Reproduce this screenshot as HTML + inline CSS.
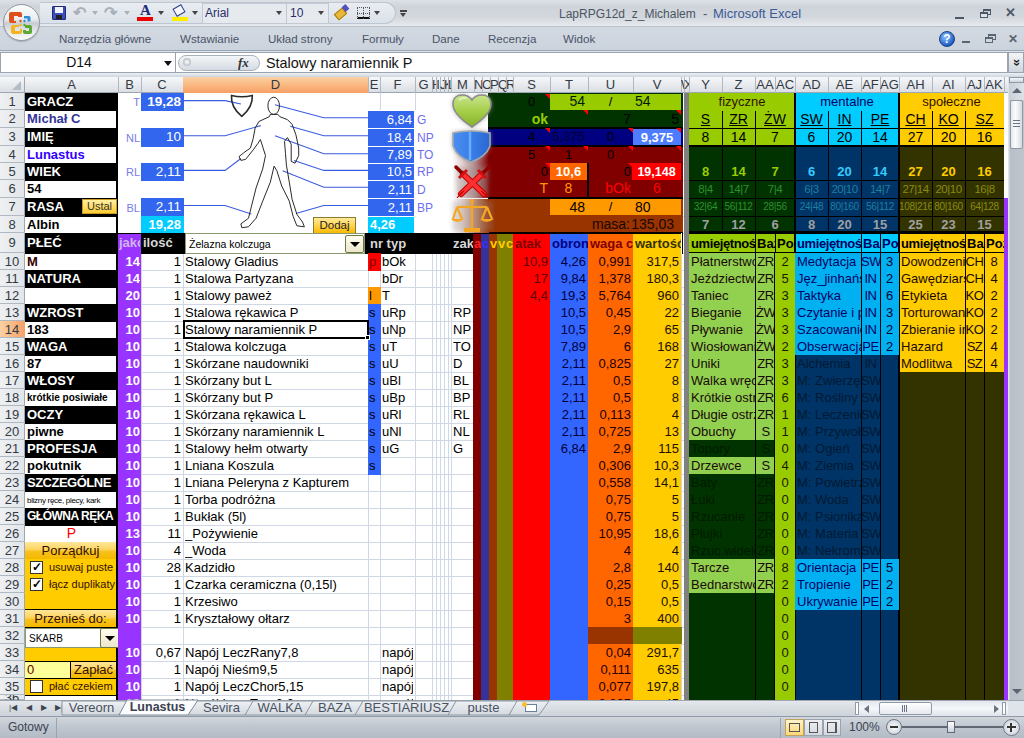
<!DOCTYPE html>
<html><head><meta charset="utf-8"><style>
html,body{margin:0;padding:0;width:1024px;height:738px;overflow:hidden;background:#fff;}
#root{position:relative;width:1024px;height:738px;overflow:hidden;font-family:"Liberation Sans",sans-serif;}
#root div{position:absolute;box-sizing:border-box;}
#root .t{white-space:nowrap;overflow:hidden;}
</style></head><body><div id="root">
<div style="left:0px;top:0px;width:1024px;height:26px;background:linear-gradient(#dde1e6 0%,#cfd4da 25%,#d2d7dd 65%,#e7eaee 100%);"></div>
<div style="left:0px;top:26px;width:1024px;height:25px;background:linear-gradient(#d3d9e1,#cbd3dd);"></div>
<div style="left:0px;top:26px;width:1024px;height:1px;background:#b9c1cb;"></div>
<div style="left:0px;top:50px;width:1024px;height:1px;background:#9aa7b7;"></div>
<div style="left:0px;top:51px;width:1024px;height:26px;background:#dde3ea;"></div>
<div style="left:0px;top:52px;width:176px;height:21px;background:#fff;border:1px solid #9aa3ae;"></div>
<div style="left:176px;top:52px;width:832px;height:21px;background:#fff;border:1px solid #9aa3ae;border-left:none;"></div>
<div style="left:1008px;top:52px;width:16px;height:21px;background:linear-gradient(#f2f4f7,#cfd6de);border:1px solid #9aa3ae;"></div>
<div class="t" style="left:1008px;top:52px;width:16px;height:21px;line-height:20px;text-align:center;font-size:13px;font-weight:bold;color:#222;transform:rotate(90deg)">&#187;</div>
<div style="left:0px;top:73px;width:1024px;height:4px;background:linear-gradient(#eef1f5,#cdd5df);"></div>
<div style="left:40px;top:2px;width:356px;height:22px;background:linear-gradient(#e9edf2,#dbe1e8);border:1px solid #bcc5d0;border-radius:0 11px 11px 0;border-left:none;"></div>
<div style="left:202px;top:3px;width:85px;height:21px;background:#e6eaef;border:1px solid #c2c9d2;"></div>
<div style="left:287px;top:3px;width:42px;height:21px;background:#e6eaef;border:1px solid #c2c9d2;border-left:none;"></div>
<div class="t" style="left:205px;top:3px;width:60px;height:20px;line-height:20px;color:#2a2a6a;font-weight:normal;font-size:12px;text-align:left;">Arial</div>
<div class="t" style="left:290px;top:3px;width:30px;height:20px;line-height:20px;color:#2a2a6a;font-weight:normal;font-size:12px;text-align:left;">10</div>
<div style="left:276px;top:11px;width:0;height:0;border-left:3.5px solid transparent;border-right:3.5px solid transparent;border-top:4px solid #444;"></div>
<div style="left:318px;top:11px;width:0;height:0;border-left:3.5px solid transparent;border-right:3.5px solid transparent;border-top:4px solid #444;"></div>
<div style="left:158px;top:11px;width:0;height:0;border-left:3.5px solid transparent;border-right:3.5px solid transparent;border-top:4px solid #444;"></div>
<div style="left:192px;top:11px;width:0;height:0;border-left:3.5px solid transparent;border-right:3.5px solid transparent;border-top:4px solid #444;"></div>
<div style="left:374px;top:11px;width:0;height:0;border-left:3.5px solid transparent;border-right:3.5px solid transparent;border-top:4px solid #444;"></div>
<div style="left:92px;top:11px;width:0;height:0;border-left:3.5px solid transparent;border-right:3.5px solid transparent;border-top:4px solid #a9b0b8;"></div>
<div style="left:124px;top:11px;width:0;height:0;border-left:3.5px solid transparent;border-right:3.5px solid transparent;border-top:4px solid #a9b0b8;"></div>
<div style="left:400px;top:10px;width:7px;height:2px;background:#444"></div>
<div style="left:400px;top:13px;width:0;height:0;border-left:3.5px solid transparent;border-right:3.5px solid transparent;border-top:4px solid #444;"></div>
<div style="left:52px;top:6px;width:14px;height:14px;background:#3c4fb8;border:1px solid #1e2a78;border-radius:1px;"></div>
<div style="left:55px;top:7px;width:8px;height:6px;background:#f0f4ff;"></div>
<div style="left:56px;top:15px;width:6px;height:4px;background:#202020;"></div>
<div class="t" style="left:73px;top:3px;width:18px;height:20px;line-height:20px;font-size:16px;color:#a9b0b8;font-weight:bold">&#8630;</div>
<div class="t" style="left:104px;top:3px;width:18px;height:20px;line-height:20px;font-size:16px;color:#a9b0b8;font-weight:bold">&#8631;</div>
<div class="t" style="left:137px;top:2px;width:17px;height:16px;line-height:16px;font-size:15px;color:#1a2a7a;font-weight:bold;text-align:center;font-family:'Liberation Serif'">A</div>
<div style="left:137px;top:17px;width:16px;height:4px;background:#ee0000;"></div>
<div style="left:174px;top:6px;width:10px;height:9px;background:#f4f6fa;border:1px solid #2a3d8a;transform:rotate(-30deg);"></div>
<div style="left:172px;top:17px;width:16px;height:4px;background:#ffee00;"></div>
<div style="left:335px;top:10px;width:11px;height:8px;background:#e8b838;border:1px solid #a47a10;transform:rotate(-40deg);"></div>
<div style="left:343px;top:5px;width:5px;height:6px;background:#5050c0;transform:rotate(-40deg);"></div>
<div style="left:357px;top:7px;width:13px;height:12px;border:1px dotted #555;border-bottom:2px solid #111"></div>
<div style="left:363px;top:7px;width:1px;height:12px;border-left:1px dotted #555"></div>
<div style="left:357px;top:13px;width:13px;height:1px;border-top:1px dotted #555"></div>
<div style="left:3px;top:4px;width:37px;height:37px;background:linear-gradient(#fbfbfb 0%,#eceef0 40%,#c9cdd2 52%,#e6e8ea 75%,#fafafa 100%);border-radius:50%;border:1px solid #8e969f;box-shadow:0 1px 1px rgba(0,0,0,.2);"></div>
<svg style="position:absolute;left:0;top:0" width="44" height="44" viewBox="0 0 44 44">
<path d="M11,12 h9 a2,2 0 0 1 2,2 v3 h-4 v-1 h-4 v5 h2 v2 h-5 a2,2 0 0 1 -2,-2 v-7 a2,2 0 0 1 2,-2 z" fill="#e0501a"/>
<path d="M24,16 h5 a1.5,1.5 0 0 1 1.5,1.5 v4 h-3 v-3 h-3.5 z" fill="#2d8fd6"/>
<path d="M12,25 h7 v2 h-4 v4 h5 v-2 h2 v3 a2,2 0 0 1 -2,2 h-7 a2,2 0 0 1 -2,-2 v-5 a2,2 0 0 1 2,-2 z" fill="#f4b321"/>
<path d="M25,25 h5 a2,2 0 0 1 2,2 v5 a2,2 0 0 1 -2,2 h-5 a2,2 0 0 1 -2,-2 v-2 h3 v1 h3 v-3 h-4 z" fill="#5da832"/>
<circle cx="20.5" cy="21" r="1.2" fill="#e0501a"/><circle cx="24.5" cy="21" r="1.2" fill="#2d8fd6"/>
<circle cx="20.5" cy="25" r="1.2" fill="#f4b321"/><circle cx="24.5" cy="25" r="1.2" fill="#5da832"/>
</svg>
<div class="t" style="left:559px;top:4px;width:142px;height:20px;line-height:20px;color:#4b5563;font-weight:normal;font-size:12px;text-align:left;">LapRPG12d_z_Michalem</div>
<div class="t" style="left:703px;top:4px;width:12px;height:20px;line-height:20px;color:#4b5563;font-weight:normal;font-size:13px;text-align:left;">-</div>
<div class="t" style="left:713px;top:4px;width:100px;height:20px;line-height:20px;color:#3b5a98;font-weight:normal;font-size:13px;text-align:left;">Microsoft Excel</div>
<div style="left:955px;top:17px;width:9px;height:2px;background:#4d5866;"></div>
<div style="left:983px;top:9px;width:8px;height:6px;background:transparent;border:1px solid #4d5866;border-top:2px solid #4d5866;"></div>
<div style="left:980px;top:12px;width:8px;height:6px;background:#dfe3e8;border:1px solid #4d5866;border-top:2px solid #4d5866;"></div>
<div class="t" style="left:1003px;top:3px;width:14px;height:20px;line-height:20px;color:#4d5866;font-weight:bold;font-size:13px;text-align:center;">✕</div>
<div style="left:962px;top:41px;width:8px;height:2px;background:#5a6573;"></div>
<div style="left:988px;top:34px;width:8px;height:6px;background:transparent;border:1px solid #5a6573;border-top:2px solid #5a6573;"></div>
<div style="left:985px;top:37px;width:8px;height:6px;background:#d0d7df;border:1px solid #5a6573;border-top:2px solid #5a6573;"></div>
<div class="t" style="left:1006px;top:29px;width:14px;height:20px;line-height:20px;color:#5a6573;font-weight:bold;font-size:12px;text-align:center;">✕</div>
<div style="left:939px;top:31px;width:16px;height:16px;background:radial-gradient(circle at 40% 35%,#8fc3ff,#1f5fc8 70%,#0d3a8a);border-radius:50%;border:1px solid #1a3f80;"></div>
<div class="t" style="left:939px;top:31px;width:16px;height:16px;line-height:16px;color:#fff;font-weight:bold;font-size:12px;text-align:center;">?</div>
<div class="t" style="left:59px;top:29px;width:120px;height:20px;line-height:20px;color:#4a5468;font-weight:normal;font-size:11.6px;text-align:left;">Narzędzia główne</div>
<div class="t" style="left:180px;top:29px;width:120px;height:20px;line-height:20px;color:#4a5468;font-weight:normal;font-size:11.6px;text-align:left;">Wstawianie</div>
<div class="t" style="left:268px;top:29px;width:120px;height:20px;line-height:20px;color:#4a5468;font-weight:normal;font-size:11.6px;text-align:left;">Układ strony</div>
<div class="t" style="left:362px;top:29px;width:120px;height:20px;line-height:20px;color:#4a5468;font-weight:normal;font-size:11.6px;text-align:left;">Formuły</div>
<div class="t" style="left:432px;top:29px;width:120px;height:20px;line-height:20px;color:#4a5468;font-weight:normal;font-size:11.6px;text-align:left;">Dane</div>
<div class="t" style="left:488px;top:29px;width:120px;height:20px;line-height:20px;color:#4a5468;font-weight:normal;font-size:11.6px;text-align:left;">Recenzja</div>
<div class="t" style="left:563px;top:29px;width:120px;height:20px;line-height:20px;color:#4a5468;font-weight:normal;font-size:11.6px;text-align:left;">Widok</div>
<div class="t" style="left:2px;top:53px;width:174px;height:19px;line-height:19px;color:#111;font-weight:normal;font-size:14px;text-align:center;padding-right:20px;">D14</div>
<div style="left:164px;top:61px;width:0;height:0;border-left:4px solid transparent;border-right:4px solid transparent;border-top:5px solid #111;"></div>
<div style="left:178px;top:55px;width:82px;height:16px;background:linear-gradient(#f4f6f8,#d5dbe2);border:1px solid #a8b0ba;border-radius:8px;"></div>
<div style="left:183px;top:58px;width:8px;height:8px;background:radial-gradient(#fff,#9aa3ad);border-radius:50%;"></div>
<div class="t" style="left:238px;top:54px;width:20px;height:18px;line-height:18px;font-size:13px;font-style:italic;font-weight:bold;color:#333;font-family:'Liberation Serif'">fx</div>
<div class="t" style="left:266px;top:53px;width:300px;height:20px;line-height:20px;color:#111;font-weight:normal;font-size:14.4px;text-align:left;">Stalowy naramiennik P</div>
<div style="left:0px;top:77px;width:1009px;height:16px;background:linear-gradient(#f7f8fa,#e4e7eb 60%,#d9dde2);"></div>
<div style="left:0px;top:92px;width:1009px;height:1px;background:#9ea7b1;"></div>
<div style="left:0px;top:93px;width:25px;height:607px;background:linear-gradient(90deg,#eef0f2,#e2e5e9);"></div>
<div style="left:24px;top:77px;width:1px;height:623px;background:#9ea7b1;"></div>
<div style="left:12px;top:81px;width:0;height:0;border-left:9px solid transparent;border-bottom:9px solid #b4bcc5;"></div>
<div style="left:118px;top:77px;width:1px;height:16px;background:#b0b8c2;"></div>
<div class="t" style="left:25px;top:77px;width:93px;height:15px;line-height:15px;color:#333a44;font-weight:normal;font-size:13px;text-align:center;">A</div>
<div style="left:141px;top:77px;width:1px;height:16px;background:#b0b8c2;"></div>
<div class="t" style="left:118px;top:77px;width:23px;height:15px;line-height:15px;color:#333a44;font-weight:normal;font-size:13px;text-align:center;">B</div>
<div style="left:183px;top:77px;width:1px;height:16px;background:#b0b8c2;"></div>
<div class="t" style="left:141px;top:77px;width:42px;height:15px;line-height:15px;color:#333a44;font-weight:normal;font-size:13px;text-align:center;">C</div>
<div style="left:183px;top:77px;width:185px;height:16px;background:linear-gradient(#fbd1a4,#f9b37a 60%,#f6a066);"></div>
<div style="left:368px;top:77px;width:1px;height:16px;background:#b0b8c2;"></div>
<div class="t" style="left:183px;top:77px;width:185px;height:15px;line-height:15px;color:#333a44;font-weight:normal;font-size:13px;text-align:center;">D</div>
<div style="left:380px;top:77px;width:1px;height:16px;background:#b0b8c2;"></div>
<div class="t" style="left:368px;top:77px;width:12px;height:15px;line-height:15px;color:#333a44;font-weight:normal;font-size:13px;text-align:center;">E</div>
<div style="left:415px;top:77px;width:1px;height:16px;background:#b0b8c2;"></div>
<div class="t" style="left:380px;top:77px;width:35px;height:15px;line-height:15px;color:#333a44;font-weight:normal;font-size:13px;text-align:center;">F</div>
<div style="left:432px;top:77px;width:1px;height:16px;background:#b0b8c2;"></div>
<div class="t" style="left:415px;top:77px;width:17px;height:15px;line-height:15px;color:#333a44;font-weight:normal;font-size:13px;text-align:center;">G</div>
<div style="left:436px;top:77px;width:1px;height:16px;background:#b0b8c2;"></div>
<div class="t" style="left:432px;top:77px;width:4px;height:15px;line-height:15px;color:#333a44;font-weight:normal;font-size:13px;text-align:center;">H</div>
<div style="left:440px;top:77px;width:1px;height:16px;background:#b0b8c2;"></div>
<div class="t" style="left:436px;top:77px;width:4px;height:15px;line-height:15px;color:#333a44;font-weight:normal;font-size:13px;text-align:center;">I</div>
<div style="left:444px;top:77px;width:1px;height:16px;background:#b0b8c2;"></div>
<div class="t" style="left:440px;top:77px;width:4px;height:15px;line-height:15px;color:#333a44;font-weight:normal;font-size:13px;text-align:center;">J</div>
<div style="left:448px;top:77px;width:1px;height:16px;background:#b0b8c2;"></div>
<div class="t" style="left:444px;top:77px;width:4px;height:15px;line-height:15px;color:#333a44;font-weight:normal;font-size:13px;text-align:center;">K</div>
<div style="left:451px;top:77px;width:1px;height:16px;background:#b0b8c2;"></div>
<div class="t" style="left:448px;top:77px;width:3px;height:15px;line-height:15px;color:#333a44;font-weight:normal;font-size:13px;text-align:center;">L</div>
<div style="left:474px;top:77px;width:1px;height:16px;background:#b0b8c2;"></div>
<div class="t" style="left:451px;top:77px;width:23px;height:15px;line-height:15px;color:#333a44;font-weight:normal;font-size:13px;text-align:center;">M</div>
<div style="left:482px;top:77px;width:1px;height:16px;background:#b0b8c2;"></div>
<div class="t" style="left:474px;top:77px;width:8px;height:15px;line-height:15px;color:#333a44;font-weight:normal;font-size:13px;text-align:center;">N</div>
<div style="left:490px;top:77px;width:1px;height:16px;background:#b0b8c2;"></div>
<div class="t" style="left:482px;top:77px;width:8px;height:15px;line-height:15px;color:#333a44;font-weight:normal;font-size:13px;text-align:center;">O</div>
<div style="left:498px;top:77px;width:1px;height:16px;background:#b0b8c2;"></div>
<div class="t" style="left:490px;top:77px;width:8px;height:15px;line-height:15px;color:#333a44;font-weight:normal;font-size:13px;text-align:center;">P</div>
<div style="left:506px;top:77px;width:1px;height:16px;background:#b0b8c2;"></div>
<div class="t" style="left:498px;top:77px;width:8px;height:15px;line-height:15px;color:#333a44;font-weight:normal;font-size:13px;text-align:center;">Q</div>
<div style="left:513px;top:77px;width:1px;height:16px;background:#b0b8c2;"></div>
<div class="t" style="left:506px;top:77px;width:7px;height:15px;line-height:15px;color:#333a44;font-weight:normal;font-size:13px;text-align:center;">R</div>
<div style="left:550px;top:77px;width:1px;height:16px;background:#b0b8c2;"></div>
<div class="t" style="left:513px;top:77px;width:37px;height:15px;line-height:15px;color:#333a44;font-weight:normal;font-size:13px;text-align:center;">S</div>
<div style="left:588px;top:77px;width:1px;height:16px;background:#b0b8c2;"></div>
<div class="t" style="left:550px;top:77px;width:38px;height:15px;line-height:15px;color:#333a44;font-weight:normal;font-size:13px;text-align:center;">T</div>
<div style="left:633px;top:77px;width:1px;height:16px;background:#b0b8c2;"></div>
<div class="t" style="left:588px;top:77px;width:45px;height:15px;line-height:15px;color:#333a44;font-weight:normal;font-size:13px;text-align:center;">U</div>
<div style="left:681px;top:77px;width:1px;height:16px;background:#b0b8c2;"></div>
<div class="t" style="left:633px;top:77px;width:48px;height:15px;line-height:15px;color:#333a44;font-weight:normal;font-size:13px;text-align:center;">V</div>
<div style="left:684px;top:77px;width:1px;height:16px;background:#b0b8c2;"></div>
<div class="t" style="left:681px;top:77px;width:3px;height:15px;line-height:15px;color:#333a44;font-weight:normal;font-size:13px;text-align:center;">W</div>
<div style="left:689px;top:77px;width:1px;height:16px;background:#b0b8c2;"></div>
<div class="t" style="left:684px;top:77px;width:5px;height:15px;line-height:15px;color:#333a44;font-weight:normal;font-size:13px;text-align:center;">X</div>
<div style="left:722px;top:77px;width:1px;height:16px;background:#b0b8c2;"></div>
<div class="t" style="left:689px;top:77px;width:33px;height:15px;line-height:15px;color:#333a44;font-weight:normal;font-size:13px;text-align:center;">Y</div>
<div style="left:755px;top:77px;width:1px;height:16px;background:#b0b8c2;"></div>
<div class="t" style="left:722px;top:77px;width:33px;height:15px;line-height:15px;color:#333a44;font-weight:normal;font-size:13px;text-align:center;">Z</div>
<div style="left:775px;top:77px;width:1px;height:16px;background:#b0b8c2;"></div>
<div class="t" style="left:755px;top:77px;width:20px;height:15px;line-height:15px;color:#333a44;font-weight:normal;font-size:13px;text-align:center;">AA</div>
<div style="left:795px;top:77px;width:1px;height:16px;background:#b0b8c2;"></div>
<div class="t" style="left:775px;top:77px;width:20px;height:15px;line-height:15px;color:#333a44;font-weight:normal;font-size:13px;text-align:center;">AC</div>
<div style="left:828px;top:77px;width:1px;height:16px;background:#b0b8c2;"></div>
<div class="t" style="left:795px;top:77px;width:33px;height:15px;line-height:15px;color:#333a44;font-weight:normal;font-size:13px;text-align:center;">AD</div>
<div style="left:861px;top:77px;width:1px;height:16px;background:#b0b8c2;"></div>
<div class="t" style="left:828px;top:77px;width:33px;height:15px;line-height:15px;color:#333a44;font-weight:normal;font-size:13px;text-align:center;">AE</div>
<div style="left:880px;top:77px;width:1px;height:16px;background:#b0b8c2;"></div>
<div class="t" style="left:861px;top:77px;width:19px;height:15px;line-height:15px;color:#333a44;font-weight:normal;font-size:13px;text-align:center;">AF</div>
<div style="left:899px;top:77px;width:1px;height:16px;background:#b0b8c2;"></div>
<div class="t" style="left:880px;top:77px;width:19px;height:15px;line-height:15px;color:#333a44;font-weight:normal;font-size:13px;text-align:center;">AG</div>
<div style="left:932px;top:77px;width:1px;height:16px;background:#b0b8c2;"></div>
<div class="t" style="left:899px;top:77px;width:33px;height:15px;line-height:15px;color:#333a44;font-weight:normal;font-size:13px;text-align:center;">AH</div>
<div style="left:965px;top:77px;width:1px;height:16px;background:#b0b8c2;"></div>
<div class="t" style="left:932px;top:77px;width:33px;height:15px;line-height:15px;color:#333a44;font-weight:normal;font-size:13px;text-align:center;">AI</div>
<div style="left:984px;top:77px;width:1px;height:16px;background:#b0b8c2;"></div>
<div class="t" style="left:965px;top:77px;width:19px;height:15px;line-height:15px;color:#333a44;font-weight:normal;font-size:13px;text-align:center;">AJ</div>
<div style="left:1004px;top:77px;width:1px;height:16px;background:#b0b8c2;"></div>
<div class="t" style="left:984px;top:77px;width:20px;height:15px;line-height:15px;color:#333a44;font-weight:normal;font-size:13px;text-align:center;">AK</div>
<div style="left:1009px;top:77px;width:1px;height:16px;background:#b0b8c2;"></div>
<div class="t" style="left:1004px;top:77px;width:5px;height:15px;line-height:15px;color:#333a44;font-weight:normal;font-size:13px;text-align:center;"></div>
<div style="left:0px;top:109px;width:25px;height:1px;background:#b0b8c2;"></div>
<div class="t" style="left:0px;top:93px;width:24px;height:17px;line-height:17px;color:#333a44;font-weight:normal;font-size:13px;text-align:center;">1</div>
<div style="left:0px;top:127px;width:25px;height:1px;background:#b0b8c2;"></div>
<div class="t" style="left:0px;top:110px;width:24px;height:18px;line-height:18px;color:#333a44;font-weight:normal;font-size:13px;text-align:center;">2</div>
<div style="left:0px;top:145px;width:25px;height:1px;background:#b0b8c2;"></div>
<div class="t" style="left:0px;top:128px;width:24px;height:18px;line-height:18px;color:#333a44;font-weight:normal;font-size:13px;text-align:center;">3</div>
<div style="left:0px;top:162px;width:25px;height:1px;background:#b0b8c2;"></div>
<div class="t" style="left:0px;top:146px;width:24px;height:17px;line-height:17px;color:#333a44;font-weight:normal;font-size:13px;text-align:center;">4</div>
<div style="left:0px;top:179px;width:25px;height:1px;background:#b0b8c2;"></div>
<div class="t" style="left:0px;top:163px;width:24px;height:17px;line-height:17px;color:#333a44;font-weight:normal;font-size:13px;text-align:center;">5</div>
<div style="left:0px;top:197px;width:25px;height:1px;background:#b0b8c2;"></div>
<div class="t" style="left:0px;top:180px;width:24px;height:18px;line-height:18px;color:#333a44;font-weight:normal;font-size:13px;text-align:center;">6</div>
<div style="left:0px;top:215px;width:25px;height:1px;background:#b0b8c2;"></div>
<div class="t" style="left:0px;top:198px;width:24px;height:18px;line-height:18px;color:#333a44;font-weight:normal;font-size:13px;text-align:center;">7</div>
<div style="left:0px;top:232px;width:25px;height:1px;background:#b0b8c2;"></div>
<div class="t" style="left:0px;top:216px;width:24px;height:17px;line-height:17px;color:#333a44;font-weight:normal;font-size:13px;text-align:center;">8</div>
<div style="left:0px;top:252px;width:25px;height:1px;background:#b0b8c2;"></div>
<div class="t" style="left:0px;top:233px;width:24px;height:20px;line-height:20px;color:#333a44;font-weight:normal;font-size:13px;text-align:center;">9</div>
<div style="left:0px;top:269px;width:25px;height:1px;background:#b0b8c2;"></div>
<div class="t" style="left:0px;top:253px;width:24px;height:17px;line-height:17px;color:#333a44;font-weight:normal;font-size:13px;text-align:center;">10</div>
<div style="left:0px;top:286px;width:25px;height:1px;background:#b0b8c2;"></div>
<div class="t" style="left:0px;top:270px;width:24px;height:17px;line-height:17px;color:#333a44;font-weight:normal;font-size:13px;text-align:center;">11</div>
<div style="left:0px;top:303px;width:25px;height:1px;background:#b0b8c2;"></div>
<div class="t" style="left:0px;top:287px;width:24px;height:17px;line-height:17px;color:#333a44;font-weight:normal;font-size:13px;text-align:center;">12</div>
<div style="left:0px;top:320px;width:25px;height:1px;background:#b0b8c2;"></div>
<div class="t" style="left:0px;top:304px;width:24px;height:17px;line-height:17px;color:#333a44;font-weight:normal;font-size:13px;text-align:center;">13</div>
<div style="left:0px;top:321px;width:25px;height:17px;background:linear-gradient(90deg,#fbd1a4,#f6a066);"></div>
<div style="left:0px;top:337px;width:25px;height:1px;background:#b0b8c2;"></div>
<div class="t" style="left:0px;top:321px;width:24px;height:17px;line-height:17px;color:#333a44;font-weight:normal;font-size:13px;text-align:center;">14</div>
<div style="left:0px;top:354px;width:25px;height:1px;background:#b0b8c2;"></div>
<div class="t" style="left:0px;top:338px;width:24px;height:17px;line-height:17px;color:#333a44;font-weight:normal;font-size:13px;text-align:center;">15</div>
<div style="left:0px;top:371px;width:25px;height:1px;background:#b0b8c2;"></div>
<div class="t" style="left:0px;top:355px;width:24px;height:17px;line-height:17px;color:#333a44;font-weight:normal;font-size:13px;text-align:center;">16</div>
<div style="left:0px;top:388px;width:25px;height:1px;background:#b0b8c2;"></div>
<div class="t" style="left:0px;top:372px;width:24px;height:17px;line-height:17px;color:#333a44;font-weight:normal;font-size:13px;text-align:center;">17</div>
<div style="left:0px;top:405px;width:25px;height:1px;background:#b0b8c2;"></div>
<div class="t" style="left:0px;top:389px;width:24px;height:17px;line-height:17px;color:#333a44;font-weight:normal;font-size:13px;text-align:center;">18</div>
<div style="left:0px;top:422px;width:25px;height:1px;background:#b0b8c2;"></div>
<div class="t" style="left:0px;top:406px;width:24px;height:17px;line-height:17px;color:#333a44;font-weight:normal;font-size:13px;text-align:center;">19</div>
<div style="left:0px;top:439px;width:25px;height:1px;background:#b0b8c2;"></div>
<div class="t" style="left:0px;top:423px;width:24px;height:17px;line-height:17px;color:#333a44;font-weight:normal;font-size:13px;text-align:center;">20</div>
<div style="left:0px;top:456px;width:25px;height:1px;background:#b0b8c2;"></div>
<div class="t" style="left:0px;top:440px;width:24px;height:17px;line-height:17px;color:#333a44;font-weight:normal;font-size:13px;text-align:center;">21</div>
<div style="left:0px;top:473px;width:25px;height:1px;background:#b0b8c2;"></div>
<div class="t" style="left:0px;top:457px;width:24px;height:17px;line-height:17px;color:#333a44;font-weight:normal;font-size:13px;text-align:center;">22</div>
<div style="left:0px;top:490px;width:25px;height:1px;background:#b0b8c2;"></div>
<div class="t" style="left:0px;top:474px;width:24px;height:17px;line-height:17px;color:#333a44;font-weight:normal;font-size:13px;text-align:center;">23</div>
<div style="left:0px;top:507px;width:25px;height:1px;background:#b0b8c2;"></div>
<div class="t" style="left:0px;top:491px;width:24px;height:17px;line-height:17px;color:#333a44;font-weight:normal;font-size:13px;text-align:center;">24</div>
<div style="left:0px;top:524px;width:25px;height:1px;background:#b0b8c2;"></div>
<div class="t" style="left:0px;top:508px;width:24px;height:17px;line-height:17px;color:#333a44;font-weight:normal;font-size:13px;text-align:center;">25</div>
<div style="left:0px;top:541px;width:25px;height:1px;background:#b0b8c2;"></div>
<div class="t" style="left:0px;top:525px;width:24px;height:17px;line-height:17px;color:#333a44;font-weight:normal;font-size:13px;text-align:center;">26</div>
<div style="left:0px;top:558px;width:25px;height:1px;background:#b0b8c2;"></div>
<div class="t" style="left:0px;top:542px;width:24px;height:17px;line-height:17px;color:#333a44;font-weight:normal;font-size:13px;text-align:center;">27</div>
<div style="left:0px;top:575px;width:25px;height:1px;background:#b0b8c2;"></div>
<div class="t" style="left:0px;top:559px;width:24px;height:17px;line-height:17px;color:#333a44;font-weight:normal;font-size:13px;text-align:center;">28</div>
<div style="left:0px;top:592px;width:25px;height:1px;background:#b0b8c2;"></div>
<div class="t" style="left:0px;top:576px;width:24px;height:17px;line-height:17px;color:#333a44;font-weight:normal;font-size:13px;text-align:center;">29</div>
<div style="left:0px;top:609px;width:25px;height:1px;background:#b0b8c2;"></div>
<div class="t" style="left:0px;top:593px;width:24px;height:17px;line-height:17px;color:#333a44;font-weight:normal;font-size:13px;text-align:center;">30</div>
<div style="left:0px;top:626px;width:25px;height:1px;background:#b0b8c2;"></div>
<div class="t" style="left:0px;top:610px;width:24px;height:17px;line-height:17px;color:#333a44;font-weight:normal;font-size:13px;text-align:center;">31</div>
<div style="left:0px;top:643px;width:25px;height:1px;background:#b0b8c2;"></div>
<div class="t" style="left:0px;top:627px;width:24px;height:17px;line-height:17px;color:#333a44;font-weight:normal;font-size:13px;text-align:center;">32</div>
<div style="left:0px;top:660px;width:25px;height:1px;background:#b0b8c2;"></div>
<div class="t" style="left:0px;top:644px;width:24px;height:17px;line-height:17px;color:#333a44;font-weight:normal;font-size:13px;text-align:center;">33</div>
<div style="left:0px;top:677px;width:25px;height:1px;background:#b0b8c2;"></div>
<div class="t" style="left:0px;top:661px;width:24px;height:17px;line-height:17px;color:#333a44;font-weight:normal;font-size:13px;text-align:center;">34</div>
<div style="left:0px;top:694px;width:25px;height:1px;background:#b0b8c2;"></div>
<div class="t" style="left:0px;top:678px;width:24px;height:17px;line-height:17px;color:#333a44;font-weight:normal;font-size:13px;text-align:center;">35</div>
<div style="left:0px;top:699px;width:25px;height:1px;background:#b0b8c2;"></div>
<div class="t" style="left:0px;top:695px;width:24px;height:5px;line-height:5px;color:#333a44;font-weight:normal;font-size:13px;text-align:center;">36</div>
<div style="left:25px;top:93px;width:984px;height:607px;background:#ffffff;"></div>
<div style="left:118px;top:93px;width:1px;height:607px;background:#d0d7e5;"></div>
<div style="left:141px;top:93px;width:1px;height:607px;background:#d0d7e5;"></div>
<div style="left:183px;top:93px;width:1px;height:607px;background:#d0d7e5;"></div>
<div style="left:368px;top:93px;width:1px;height:607px;background:#d0d7e5;"></div>
<div style="left:380px;top:93px;width:1px;height:607px;background:#d0d7e5;"></div>
<div style="left:415px;top:93px;width:1px;height:607px;background:#d0d7e5;"></div>
<div style="left:432px;top:93px;width:1px;height:607px;background:#d0d7e5;"></div>
<div style="left:436px;top:93px;width:1px;height:607px;background:#d0d7e5;"></div>
<div style="left:440px;top:93px;width:1px;height:607px;background:#d0d7e5;"></div>
<div style="left:444px;top:93px;width:1px;height:607px;background:#d0d7e5;"></div>
<div style="left:448px;top:93px;width:1px;height:607px;background:#d0d7e5;"></div>
<div style="left:451px;top:93px;width:1px;height:607px;background:#d0d7e5;"></div>
<div style="left:474px;top:93px;width:1px;height:607px;background:#d0d7e5;"></div>
<div style="left:482px;top:93px;width:1px;height:607px;background:#d0d7e5;"></div>
<div style="left:490px;top:93px;width:1px;height:607px;background:#d0d7e5;"></div>
<div style="left:498px;top:93px;width:1px;height:607px;background:#d0d7e5;"></div>
<div style="left:506px;top:93px;width:1px;height:607px;background:#d0d7e5;"></div>
<div style="left:513px;top:93px;width:1px;height:607px;background:#d0d7e5;"></div>
<div style="left:550px;top:93px;width:1px;height:607px;background:#d0d7e5;"></div>
<div style="left:588px;top:93px;width:1px;height:607px;background:#d0d7e5;"></div>
<div style="left:633px;top:93px;width:1px;height:607px;background:#d0d7e5;"></div>
<div style="left:681px;top:93px;width:1px;height:607px;background:#d0d7e5;"></div>
<div style="left:684px;top:93px;width:1px;height:607px;background:#d0d7e5;"></div>
<div style="left:689px;top:93px;width:1px;height:607px;background:#d0d7e5;"></div>
<div style="left:722px;top:93px;width:1px;height:607px;background:#d0d7e5;"></div>
<div style="left:755px;top:93px;width:1px;height:607px;background:#d0d7e5;"></div>
<div style="left:775px;top:93px;width:1px;height:607px;background:#d0d7e5;"></div>
<div style="left:795px;top:93px;width:1px;height:607px;background:#d0d7e5;"></div>
<div style="left:828px;top:93px;width:1px;height:607px;background:#d0d7e5;"></div>
<div style="left:861px;top:93px;width:1px;height:607px;background:#d0d7e5;"></div>
<div style="left:880px;top:93px;width:1px;height:607px;background:#d0d7e5;"></div>
<div style="left:899px;top:93px;width:1px;height:607px;background:#d0d7e5;"></div>
<div style="left:932px;top:93px;width:1px;height:607px;background:#d0d7e5;"></div>
<div style="left:965px;top:93px;width:1px;height:607px;background:#d0d7e5;"></div>
<div style="left:984px;top:93px;width:1px;height:607px;background:#d0d7e5;"></div>
<div style="left:1004px;top:93px;width:1px;height:607px;background:#d0d7e5;"></div>
<div style="left:1009px;top:93px;width:1px;height:607px;background:#d0d7e5;"></div>
<div style="left:25px;top:110px;width:984px;height:1px;background:#d0d7e5;"></div>
<div style="left:25px;top:128px;width:984px;height:1px;background:#d0d7e5;"></div>
<div style="left:25px;top:146px;width:984px;height:1px;background:#d0d7e5;"></div>
<div style="left:25px;top:163px;width:984px;height:1px;background:#d0d7e5;"></div>
<div style="left:25px;top:180px;width:984px;height:1px;background:#d0d7e5;"></div>
<div style="left:25px;top:198px;width:984px;height:1px;background:#d0d7e5;"></div>
<div style="left:25px;top:216px;width:984px;height:1px;background:#d0d7e5;"></div>
<div style="left:25px;top:233px;width:984px;height:1px;background:#d0d7e5;"></div>
<div style="left:25px;top:253px;width:984px;height:1px;background:#d0d7e5;"></div>
<div style="left:25px;top:270px;width:984px;height:1px;background:#d0d7e5;"></div>
<div style="left:25px;top:287px;width:984px;height:1px;background:#d0d7e5;"></div>
<div style="left:25px;top:304px;width:984px;height:1px;background:#d0d7e5;"></div>
<div style="left:25px;top:321px;width:984px;height:1px;background:#d0d7e5;"></div>
<div style="left:25px;top:338px;width:984px;height:1px;background:#d0d7e5;"></div>
<div style="left:25px;top:355px;width:984px;height:1px;background:#d0d7e5;"></div>
<div style="left:25px;top:372px;width:984px;height:1px;background:#d0d7e5;"></div>
<div style="left:25px;top:389px;width:984px;height:1px;background:#d0d7e5;"></div>
<div style="left:25px;top:406px;width:984px;height:1px;background:#d0d7e5;"></div>
<div style="left:25px;top:423px;width:984px;height:1px;background:#d0d7e5;"></div>
<div style="left:25px;top:440px;width:984px;height:1px;background:#d0d7e5;"></div>
<div style="left:25px;top:457px;width:984px;height:1px;background:#d0d7e5;"></div>
<div style="left:25px;top:474px;width:984px;height:1px;background:#d0d7e5;"></div>
<div style="left:25px;top:491px;width:984px;height:1px;background:#d0d7e5;"></div>
<div style="left:25px;top:508px;width:984px;height:1px;background:#d0d7e5;"></div>
<div style="left:25px;top:525px;width:984px;height:1px;background:#d0d7e5;"></div>
<div style="left:25px;top:542px;width:984px;height:1px;background:#d0d7e5;"></div>
<div style="left:25px;top:559px;width:984px;height:1px;background:#d0d7e5;"></div>
<div style="left:25px;top:576px;width:984px;height:1px;background:#d0d7e5;"></div>
<div style="left:25px;top:593px;width:984px;height:1px;background:#d0d7e5;"></div>
<div style="left:25px;top:610px;width:984px;height:1px;background:#d0d7e5;"></div>
<div style="left:25px;top:627px;width:984px;height:1px;background:#d0d7e5;"></div>
<div style="left:25px;top:644px;width:984px;height:1px;background:#d0d7e5;"></div>
<div style="left:25px;top:661px;width:984px;height:1px;background:#d0d7e5;"></div>
<div style="left:25px;top:678px;width:984px;height:1px;background:#d0d7e5;"></div>
<div style="left:25px;top:695px;width:984px;height:1px;background:#d0d7e5;"></div>
<div style="left:118px;top:93px;width:370px;height:140px;background:#ffffff;"></div>
<div style="left:380px;top:93px;width:1px;height:17px;background:#d0d7e5;"></div>
<div style="left:415px;top:93px;width:1px;height:17px;background:#d0d7e5;"></div>
<div style="left:25px;top:93px;width:93px;height:450px;background:#000000;"></div>
<div style="left:25px;top:111px;width:91px;height:17px;background:#ffffff;"></div>
<div style="left:25px;top:147px;width:91px;height:16px;background:#ffffff;"></div>
<div style="left:25px;top:181px;width:91px;height:17px;background:#ffffff;"></div>
<div style="left:25px;top:217px;width:91px;height:16px;background:#ffffff;"></div>
<div style="left:25px;top:254px;width:91px;height:16px;background:#ffffff;"></div>
<div style="left:25px;top:288px;width:91px;height:16px;background:#ffffff;"></div>
<div style="left:25px;top:322px;width:91px;height:16px;background:#ffffff;"></div>
<div style="left:25px;top:356px;width:91px;height:16px;background:#ffffff;"></div>
<div style="left:25px;top:390px;width:91px;height:16px;background:#ffffff;"></div>
<div style="left:25px;top:424px;width:91px;height:16px;background:#ffffff;"></div>
<div style="left:25px;top:458px;width:91px;height:16px;background:#ffffff;"></div>
<div style="left:25px;top:492px;width:91px;height:16px;background:#ffffff;"></div>
<div style="left:25px;top:526px;width:91px;height:16px;background:#ffffff;"></div>
<div class="t" style="left:27px;top:93px;width:89px;height:17px;line-height:17px;color:#fff;font-weight:bold;font-size:13px;text-align:left;">GRACZ</div>
<div class="t" style="left:27px;top:128px;width:89px;height:18px;line-height:18px;color:#fff;font-weight:bold;font-size:13px;text-align:left;">IMIĘ</div>
<div class="t" style="left:27px;top:163px;width:89px;height:17px;line-height:17px;color:#fff;font-weight:bold;font-size:13px;text-align:left;">WIEK</div>
<div class="t" style="left:27px;top:198px;width:89px;height:18px;line-height:18px;color:#fff;font-weight:bold;font-size:13px;text-align:left;">RASA</div>
<div class="t" style="left:27px;top:233px;width:89px;height:20px;line-height:20px;color:#fff;font-weight:bold;font-size:13px;text-align:left;">PŁEĆ</div>
<div class="t" style="left:27px;top:270px;width:89px;height:17px;line-height:17px;color:#fff;font-weight:bold;font-size:13px;text-align:left;">NATURA</div>
<div class="t" style="left:27px;top:304px;width:89px;height:17px;line-height:17px;color:#fff;font-weight:bold;font-size:13px;text-align:left;">WZROST</div>
<div class="t" style="left:27px;top:338px;width:89px;height:17px;line-height:17px;color:#fff;font-weight:bold;font-size:13px;text-align:left;">WAGA</div>
<div class="t" style="left:27px;top:372px;width:89px;height:17px;line-height:17px;color:#fff;font-weight:bold;font-size:13px;text-align:left;">WŁOSY</div>
<div class="t" style="left:27px;top:406px;width:89px;height:17px;line-height:17px;color:#fff;font-weight:bold;font-size:13px;text-align:left;">OCZY</div>
<div class="t" style="left:27px;top:440px;width:89px;height:17px;line-height:17px;color:#fff;font-weight:bold;font-size:13px;text-align:left;">PROFESJA</div>
<div class="t" style="left:27px;top:474px;width:89px;height:17px;line-height:17px;color:#fff;font-weight:bold;font-size:13px;text-align:left;letter-spacing:-0.5px;">SZCZEGÓLNE</div>
<div class="t" style="left:27px;top:508px;width:89px;height:17px;line-height:17px;color:#fff;font-weight:bold;font-size:12px;text-align:left;letter-spacing:-0.5px;">GŁÓWNA RĘKA</div>
<div class="t" style="left:27px;top:110px;width:89px;height:18px;line-height:18px;color:#333399;font-weight:bold;font-size:13px;text-align:left;">Michał C</div>
<div class="t" style="left:27px;top:146px;width:89px;height:17px;line-height:17px;color:#3300ff;font-weight:bold;font-size:13px;text-align:left;">Lunastus</div>
<div class="t" style="left:27px;top:180px;width:89px;height:18px;line-height:18px;color:#000;font-weight:bold;font-size:13px;text-align:left;">54</div>
<div class="t" style="left:27px;top:216px;width:89px;height:17px;line-height:17px;color:#000;font-weight:bold;font-size:13px;text-align:left;">Albin</div>
<div class="t" style="left:27px;top:253px;width:89px;height:17px;line-height:17px;color:#330000;font-weight:bold;font-size:13px;text-align:left;">M</div>
<div class="t" style="left:27px;top:321px;width:89px;height:17px;line-height:17px;color:#000;font-weight:bold;font-size:13px;text-align:left;">183</div>
<div class="t" style="left:27px;top:355px;width:89px;height:17px;line-height:17px;color:#000;font-weight:bold;font-size:13px;text-align:left;">87</div>
<div class="t" style="left:27px;top:389px;width:89px;height:17px;line-height:17px;color:#000;font-weight:bold;font-size:10px;text-align:left;">krótkie posiwiałe</div>
<div class="t" style="left:27px;top:423px;width:89px;height:17px;line-height:17px;color:#000;font-weight:bold;font-size:13px;text-align:left;">piwne</div>
<div class="t" style="left:27px;top:457px;width:89px;height:17px;line-height:17px;color:#000;font-weight:bold;font-size:13px;text-align:left;">pokutnik</div>
<div class="t" style="left:27px;top:492px;width:89px;height:17px;line-height:17px;color:#000;font-weight:normal;font-size:8px;text-align:left;letter-spacing:-0.3px;">blizny ręce, plecy, kark</div>
<div class="t" style="left:27px;top:525px;width:89px;height:17px;line-height:17px;color:#ff0000;font-weight:normal;font-size:14px;text-align:center;">P</div>
<div style="left:82px;top:199px;width:35px;height:15px;background:linear-gradient(#fff0a0,#ffcc33);border:1px solid #c89a20;"></div>
<div class="t" style="left:82px;top:199px;width:35px;height:15px;line-height:15px;color:#333;font-weight:normal;font-size:11px;text-align:center;">Ustal</div>
<div style="left:25px;top:542px;width:93px;height:158px;background:#000000;"></div>
<div style="left:25px;top:542px;width:91px;height:17px;background:linear-gradient(#ffe79a,#fdd35e 45%,#f8c21c 55%,#f5b800);"></div>
<div class="t" style="left:25px;top:542px;width:91px;height:17px;line-height:17px;color:#331100;font-weight:normal;font-size:13px;text-align:center;">Porządkuj</div>
<div style="left:25px;top:559px;width:91px;height:50px;background:#ffcc00;"></div>
<div style="left:30px;top:561px;width:13px;height:13px;background:#fff;border:1px solid #333;"></div>
<div class="t" style="left:30px;top:560px;width:13px;height:14px;line-height:14px;font-size:12px;font-weight:bold;text-align:center;color:#000">&#10003;</div>
<div class="t" style="left:49px;top:559px;width:70px;height:17px;line-height:17px;color:#331100;font-weight:normal;font-size:11px;text-align:left;">usuwaj puste</div>
<div style="left:30px;top:578px;width:13px;height:13px;background:#fff;border:1px solid #333;"></div>
<div class="t" style="left:30px;top:577px;width:13px;height:14px;line-height:14px;font-size:12px;font-weight:bold;text-align:center;color:#000">&#10003;</div>
<div class="t" style="left:49px;top:576px;width:70px;height:17px;line-height:17px;color:#331100;font-weight:normal;font-size:11px;text-align:left;">łącz duplikaty</div>
<div style="left:25px;top:610px;width:91px;height:17px;background:linear-gradient(#ffe79a,#fdd35e 45%,#f8c21c 55%,#f5b800);"></div>
<div class="t" style="left:25px;top:610px;width:91px;height:17px;line-height:17px;color:#331100;font-weight:normal;font-size:13px;text-align:center;">Przenieś do:</div>
<div style="left:25px;top:628px;width:95px;height:20px;background:#fff;border:1px solid #8a9a70;"></div>
<div class="t" style="left:29px;top:629px;width:70px;height:20px;line-height:20px;color:#000;font-weight:normal;font-size:10px;text-align:left;">SKARB</div>
<div style="left:100px;top:628px;width:20px;height:20px;background:linear-gradient(#fffdf0,#ece6cc);border:1px solid #6a7a40;border-radius:2px;"></div>
<div style="left:105px;top:636px;width:0;height:0;border-left:5px solid transparent;border-right:5px solid transparent;border-top:5px solid #000;"></div>
<div style="left:25px;top:648px;width:91px;height:13px;background:#ffcc00;"></div>
<div style="left:25px;top:662px;width:45px;height:16px;background:#ffff99;"></div>
<div class="t" style="left:27px;top:661px;width:40px;height:17px;line-height:17px;color:#660000;font-weight:normal;font-size:13px;text-align:left;">0</div>
<div style="left:71px;top:662px;width:45px;height:16px;background:linear-gradient(#ffe79a,#fdd35e 45%,#f8c21c 55%,#f5b800);"></div>
<div class="t" style="left:71px;top:662px;width:45px;height:16px;line-height:16px;color:#331100;font-weight:normal;font-size:13px;text-align:center;">Zapłać</div>
<div style="left:25px;top:679px;width:91px;height:16px;background:#ffcc00;"></div>
<div style="left:30px;top:680px;width:13px;height:13px;background:#fff;border:1px solid #333;"></div>
<div class="t" style="left:49px;top:678px;width:70px;height:17px;line-height:17px;color:#331100;font-weight:normal;font-size:11px;text-align:left;">płać czekiem</div>
<div style="left:25px;top:696px;width:91px;height:5px;background:#fff;"></div>
<div style="left:118px;top:234px;width:23px;height:466px;background:#9933ff;"></div>
<div class="t" style="left:119px;top:253px;width:21px;height:17px;line-height:17px;color:#fff;font-weight:bold;font-size:13px;text-align:right;">14</div>
<div class="t" style="left:119px;top:270px;width:21px;height:17px;line-height:17px;color:#fff;font-weight:bold;font-size:13px;text-align:right;">14</div>
<div class="t" style="left:119px;top:287px;width:21px;height:17px;line-height:17px;color:#fff;font-weight:bold;font-size:13px;text-align:right;">20</div>
<div class="t" style="left:119px;top:304px;width:21px;height:17px;line-height:17px;color:#fff;font-weight:bold;font-size:13px;text-align:right;">10</div>
<div class="t" style="left:119px;top:321px;width:21px;height:17px;line-height:17px;color:#fff;font-weight:bold;font-size:13px;text-align:right;">10</div>
<div class="t" style="left:119px;top:338px;width:21px;height:17px;line-height:17px;color:#fff;font-weight:bold;font-size:13px;text-align:right;">10</div>
<div class="t" style="left:119px;top:355px;width:21px;height:17px;line-height:17px;color:#fff;font-weight:bold;font-size:13px;text-align:right;">10</div>
<div class="t" style="left:119px;top:372px;width:21px;height:17px;line-height:17px;color:#fff;font-weight:bold;font-size:13px;text-align:right;">10</div>
<div class="t" style="left:119px;top:389px;width:21px;height:17px;line-height:17px;color:#fff;font-weight:bold;font-size:13px;text-align:right;">10</div>
<div class="t" style="left:119px;top:406px;width:21px;height:17px;line-height:17px;color:#fff;font-weight:bold;font-size:13px;text-align:right;">10</div>
<div class="t" style="left:119px;top:423px;width:21px;height:17px;line-height:17px;color:#fff;font-weight:bold;font-size:13px;text-align:right;">10</div>
<div class="t" style="left:119px;top:440px;width:21px;height:17px;line-height:17px;color:#fff;font-weight:bold;font-size:13px;text-align:right;">10</div>
<div class="t" style="left:119px;top:457px;width:21px;height:17px;line-height:17px;color:#fff;font-weight:bold;font-size:13px;text-align:right;">10</div>
<div class="t" style="left:119px;top:474px;width:21px;height:17px;line-height:17px;color:#fff;font-weight:bold;font-size:13px;text-align:right;">10</div>
<div class="t" style="left:119px;top:491px;width:21px;height:17px;line-height:17px;color:#fff;font-weight:bold;font-size:13px;text-align:right;">10</div>
<div class="t" style="left:119px;top:508px;width:21px;height:17px;line-height:17px;color:#fff;font-weight:bold;font-size:13px;text-align:right;">10</div>
<div class="t" style="left:119px;top:525px;width:21px;height:17px;line-height:17px;color:#fff;font-weight:bold;font-size:13px;text-align:right;">13</div>
<div class="t" style="left:119px;top:542px;width:21px;height:17px;line-height:17px;color:#fff;font-weight:bold;font-size:13px;text-align:right;">10</div>
<div class="t" style="left:119px;top:559px;width:21px;height:17px;line-height:17px;color:#fff;font-weight:bold;font-size:13px;text-align:right;">10</div>
<div class="t" style="left:119px;top:576px;width:21px;height:17px;line-height:17px;color:#fff;font-weight:bold;font-size:13px;text-align:right;">10</div>
<div class="t" style="left:119px;top:593px;width:21px;height:17px;line-height:17px;color:#fff;font-weight:bold;font-size:13px;text-align:right;">10</div>
<div class="t" style="left:119px;top:610px;width:21px;height:17px;line-height:17px;color:#fff;font-weight:bold;font-size:13px;text-align:right;">10</div>
<div class="t" style="left:119px;top:644px;width:21px;height:17px;line-height:17px;color:#fff;font-weight:bold;font-size:13px;text-align:right;">10</div>
<div class="t" style="left:119px;top:661px;width:21px;height:17px;line-height:17px;color:#fff;font-weight:bold;font-size:13px;text-align:right;">10</div>
<div class="t" style="left:119px;top:678px;width:21px;height:17px;line-height:17px;color:#fff;font-weight:bold;font-size:13px;text-align:right;">10</div>
<div class="t" style="left:119px;top:695px;width:21px;height:17px;line-height:17px;color:#fff;font-weight:bold;font-size:13px;text-align:right;">10</div>
<div class="t" style="left:119px;top:94px;width:21px;height:17px;line-height:17px;color:#7a7ae8;font-weight:normal;font-size:11px;text-align:right;">T</div>
<div class="t" style="left:119px;top:129px;width:21px;height:18px;line-height:18px;color:#7a7ae8;font-weight:normal;font-size:11px;text-align:right;">NL</div>
<div class="t" style="left:119px;top:164px;width:21px;height:17px;line-height:17px;color:#7a7ae8;font-weight:normal;font-size:11px;text-align:right;">RL</div>
<div class="t" style="left:119px;top:199px;width:21px;height:18px;line-height:18px;color:#7a7ae8;font-weight:normal;font-size:11px;text-align:right;">BL</div>
<div style="left:141px;top:93px;width:43px;height:18px;background:#3366ee;"></div>
<div class="t" style="left:143px;top:93px;width:38px;height:17px;line-height:17px;color:#fff;font-weight:bold;font-size:13.5px;text-align:right;">19,28</div>
<div style="left:141px;top:128px;width:43px;height:19px;background:#3366ee;"></div>
<div class="t" style="left:143px;top:128px;width:38px;height:18px;line-height:18px;color:#fff;font-weight:normal;font-size:13.5px;text-align:right;">10</div>
<div style="left:141px;top:163px;width:43px;height:18px;background:#3366ee;"></div>
<div class="t" style="left:143px;top:163px;width:38px;height:17px;line-height:17px;color:#fff;font-weight:normal;font-size:13.5px;text-align:right;">2,11</div>
<div style="left:141px;top:198px;width:43px;height:19px;background:#3366ee;"></div>
<div class="t" style="left:143px;top:198px;width:38px;height:18px;line-height:18px;color:#fff;font-weight:normal;font-size:13.5px;text-align:right;">2,11</div>
<div style="left:141px;top:216px;width:43px;height:18px;background:#00ccff;"></div>
<div class="t" style="left:143px;top:216px;width:38px;height:17px;line-height:17px;color:#fff;font-weight:bold;font-size:13px;text-align:right;">19,28</div>
<div class="t" style="left:143px;top:253px;width:38px;height:17px;line-height:17px;color:#000;font-weight:normal;font-size:13px;text-align:right;">1</div>
<div class="t" style="left:143px;top:270px;width:38px;height:17px;line-height:17px;color:#000;font-weight:normal;font-size:13px;text-align:right;">1</div>
<div class="t" style="left:143px;top:287px;width:38px;height:17px;line-height:17px;color:#000;font-weight:normal;font-size:13px;text-align:right;">1</div>
<div class="t" style="left:143px;top:304px;width:38px;height:17px;line-height:17px;color:#000;font-weight:normal;font-size:13px;text-align:right;">1</div>
<div class="t" style="left:143px;top:321px;width:38px;height:17px;line-height:17px;color:#000;font-weight:normal;font-size:13px;text-align:right;">1</div>
<div class="t" style="left:143px;top:338px;width:38px;height:17px;line-height:17px;color:#000;font-weight:normal;font-size:13px;text-align:right;">1</div>
<div class="t" style="left:143px;top:355px;width:38px;height:17px;line-height:17px;color:#000;font-weight:normal;font-size:13px;text-align:right;">1</div>
<div class="t" style="left:143px;top:372px;width:38px;height:17px;line-height:17px;color:#000;font-weight:normal;font-size:13px;text-align:right;">1</div>
<div class="t" style="left:143px;top:389px;width:38px;height:17px;line-height:17px;color:#000;font-weight:normal;font-size:13px;text-align:right;">1</div>
<div class="t" style="left:143px;top:406px;width:38px;height:17px;line-height:17px;color:#000;font-weight:normal;font-size:13px;text-align:right;">1</div>
<div class="t" style="left:143px;top:423px;width:38px;height:17px;line-height:17px;color:#000;font-weight:normal;font-size:13px;text-align:right;">1</div>
<div class="t" style="left:143px;top:440px;width:38px;height:17px;line-height:17px;color:#000;font-weight:normal;font-size:13px;text-align:right;">1</div>
<div class="t" style="left:143px;top:457px;width:38px;height:17px;line-height:17px;color:#000;font-weight:normal;font-size:13px;text-align:right;">1</div>
<div class="t" style="left:143px;top:474px;width:38px;height:17px;line-height:17px;color:#000;font-weight:normal;font-size:13px;text-align:right;">1</div>
<div class="t" style="left:143px;top:491px;width:38px;height:17px;line-height:17px;color:#000;font-weight:normal;font-size:13px;text-align:right;">1</div>
<div class="t" style="left:143px;top:508px;width:38px;height:17px;line-height:17px;color:#000;font-weight:normal;font-size:13px;text-align:right;">1</div>
<div class="t" style="left:143px;top:525px;width:38px;height:17px;line-height:17px;color:#000;font-weight:normal;font-size:13px;text-align:right;">11</div>
<div class="t" style="left:143px;top:542px;width:38px;height:17px;line-height:17px;color:#000;font-weight:normal;font-size:13px;text-align:right;">4</div>
<div class="t" style="left:143px;top:559px;width:38px;height:17px;line-height:17px;color:#000;font-weight:normal;font-size:13px;text-align:right;">28</div>
<div class="t" style="left:143px;top:576px;width:38px;height:17px;line-height:17px;color:#000;font-weight:normal;font-size:13px;text-align:right;">1</div>
<div class="t" style="left:143px;top:593px;width:38px;height:17px;line-height:17px;color:#000;font-weight:normal;font-size:13px;text-align:right;">1</div>
<div class="t" style="left:143px;top:610px;width:38px;height:17px;line-height:17px;color:#000;font-weight:normal;font-size:13px;text-align:right;">1</div>
<div class="t" style="left:143px;top:644px;width:38px;height:17px;line-height:17px;color:#000;font-weight:normal;font-size:13px;text-align:right;">0,67</div>
<div class="t" style="left:143px;top:661px;width:38px;height:17px;line-height:17px;color:#000;font-weight:normal;font-size:13px;text-align:right;">1</div>
<div class="t" style="left:143px;top:678px;width:38px;height:17px;line-height:17px;color:#000;font-weight:normal;font-size:13px;text-align:right;">1</div>
<div class="t" style="left:143px;top:695px;width:38px;height:17px;line-height:17px;color:#000;font-weight:normal;font-size:13px;text-align:right;">1</div>
<svg style="position:absolute;left:183px;top:93px" width="185" height="140" viewBox="0 0 185 140">
<g fill="none" stroke="#3b5be0" stroke-width="1.1">
<polyline points="0,7.6 42.1,7.6 57.9,11"/>
<polyline points="0,42.7 42.1,42.7 77.8,32.6"/>
<polyline points="0,77.4 42.1,77.4 57.9,65.5"/>
<polyline points="0,112.5 42.1,112.5 68.3,121"/>
<polyline points="185,24.7 140.8,24.7 92,11.8"/>
<polyline points="185,42.7 140.8,42.7 107.2,33.2"/>
<polyline points="185,60.7 140.8,60.7 92,42.7"/>
<polyline points="185,77.4 140.8,77.4 111,67.4"/>
<polyline points="185,94.3 140.8,94.3 99.6,77.8"/>
<polyline points="185,112.5 140.8,112.5 112.9,120.5"/>
</g>
<g fill="none" stroke="#2a2a2a" stroke-width="1">
<path d="M48.5,2.5 Q58.8,5 69.3,2.5 Q70,14 58.8,23.3 Q47.5,14 48.5,2.5 Z" stroke-width="1.6"/>
<ellipse cx="90.7" cy="12.8" rx="5.8" ry="8.6"/>
<polygon points="87.3,21.4 86.3,23.7 75.9,28.5 72.1,35.1 70.2,45.5 67.4,55.0 60.7,59.8 56.0,63.6 57.9,67.4 62.6,66.4 70.2,56.9 75.0,50.3 77.4,46.5 82.5,62.6 79.7,75.9 73.1,94.9 68.3,113.9 65.5,125.2 57.9,130.9 58.8,134.7 65.5,133.8 73.1,125.2 79.7,108.2 87.3,89.2 91.1,73.1 93.9,77.8 98.7,93.0 106.3,108.2 110.1,123.3 113.9,132.8 121.4,133.8 119.5,129.0 113.9,121.4 109.1,106.3 106.3,89.2 103.4,72.1 102.5,60.7 101.5,48.4 104.4,44.6 108.2,51.2 108.2,68.3 112.0,70.2 115.7,62.6 115.7,55.0 112.9,41.7 109.1,31.3 104.4,26.6 96.8,23.7 94.9,21.4"/>
</g></svg>
<div style="left:313px;top:217px;width:43px;height:17px;background:linear-gradient(#ffeb9c,#ffd34f 50%,#f7b900);border:1px solid #8a7a30;"></div>
<div class="t" style="left:313px;top:217px;width:43px;height:17px;line-height:17px;color:#222;font-weight:normal;font-size:11.5px;text-align:center;">Dodaj</div>
<div style="left:368px;top:111px;width:46px;height:17px;background:#3366ee;"></div>
<div class="t" style="left:368px;top:111px;width:44px;height:17px;line-height:17px;color:#fff;font-weight:normal;font-size:13px;text-align:right;">6,84</div>
<div class="t" style="left:417px;top:111px;width:30px;height:18px;line-height:18px;color:#7070f0;font-weight:normal;font-size:12px;text-align:left;">G</div>
<div style="left:368px;top:129px;width:46px;height:17px;background:#3366ee;"></div>
<div class="t" style="left:368px;top:129px;width:44px;height:17px;line-height:17px;color:#fff;font-weight:normal;font-size:13px;text-align:right;">18,4</div>
<div class="t" style="left:417px;top:129px;width:30px;height:18px;line-height:18px;color:#7070f0;font-weight:normal;font-size:12px;text-align:left;">NP</div>
<div style="left:368px;top:147px;width:46px;height:16px;background:#3366ee;"></div>
<div class="t" style="left:368px;top:147px;width:44px;height:16px;line-height:16px;color:#fff;font-weight:normal;font-size:13px;text-align:right;">7,89</div>
<div class="t" style="left:417px;top:147px;width:30px;height:17px;line-height:17px;color:#7070f0;font-weight:normal;font-size:12px;text-align:left;">TO</div>
<div style="left:368px;top:164px;width:46px;height:16px;background:#3366ee;"></div>
<div class="t" style="left:368px;top:164px;width:44px;height:16px;line-height:16px;color:#fff;font-weight:normal;font-size:13px;text-align:right;">10,5</div>
<div class="t" style="left:417px;top:164px;width:30px;height:17px;line-height:17px;color:#7070f0;font-weight:normal;font-size:12px;text-align:left;">RP</div>
<div style="left:368px;top:181px;width:46px;height:17px;background:#3366ee;"></div>
<div class="t" style="left:368px;top:181px;width:44px;height:17px;line-height:17px;color:#fff;font-weight:normal;font-size:13px;text-align:right;">2,11</div>
<div class="t" style="left:417px;top:181px;width:30px;height:18px;line-height:18px;color:#7070f0;font-weight:normal;font-size:12px;text-align:left;">D</div>
<div style="left:368px;top:199px;width:46px;height:17px;background:#3366ee;"></div>
<div class="t" style="left:368px;top:199px;width:44px;height:17px;line-height:17px;color:#fff;font-weight:normal;font-size:13px;text-align:right;">2,11</div>
<div class="t" style="left:417px;top:199px;width:30px;height:18px;line-height:18px;color:#7070f0;font-weight:normal;font-size:12px;text-align:left;">BP</div>
<div style="left:368px;top:217px;width:46px;height:16px;background:#00ccff;"></div>
<div class="t" style="left:370px;top:217px;width:44px;height:16px;line-height:16px;color:#fff;font-weight:bold;font-size:13px;text-align:left;">4,26</div>
<div style="left:25px;top:233px;width:456px;height:21px;background:#000;"></div>
<div class="t" style="left:27px;top:233px;width:89px;height:20px;line-height:20px;color:#fff;font-weight:bold;font-size:13px;text-align:left;">PŁEĆ</div>
<div style="left:118px;top:234px;width:23px;height:20px;background:#9933ff;"></div>
<div class="t" style="left:119px;top:233px;width:21px;height:20px;line-height:20px;color:#d2b4f0;font-weight:bold;font-size:13px;text-align:left;">jakość</div>
<div class="t" style="left:143px;top:233px;width:38px;height:20px;line-height:20px;color:#d8d8d8;font-weight:bold;font-size:13px;text-align:left;">ilość</div>
<div style="left:185px;top:233px;width:180px;height:21px;background:#fff;border:1px solid #8a9a70;"></div>
<div class="t" style="left:189px;top:234px;width:150px;height:21px;line-height:21px;color:#000;font-weight:normal;font-size:10.5px;text-align:left;">Żelazna kolczuga</div>
<div style="left:345px;top:235px;width:19px;height:18px;background:linear-gradient(#fffdf0,#ece6cc);border:1px solid #6a7a40;border-radius:2px;"></div>
<div style="left:350px;top:242px;width:0;height:0;border-left:5px solid transparent;border-right:5px solid transparent;border-top:5px solid #000;"></div>
<div class="t" style="left:370px;top:233px;width:60px;height:21px;line-height:21px;color:#d8d8d8;font-weight:bold;font-size:13px;text-align:left;">nr typ</div>
<div class="t" style="left:453px;top:234px;width:30px;height:20px;line-height:20px;color:#d8d8d8;font-weight:bold;font-size:13px;text-align:left;">zak</div>
<div class="t" style="left:185px;top:253px;width:181px;height:17px;line-height:17px;color:#000;font-weight:normal;font-size:13px;text-align:left;">Stalowy Gladius</div>
<div class="t" style="left:185px;top:270px;width:181px;height:17px;line-height:17px;color:#000;font-weight:normal;font-size:13px;text-align:left;">Stalowa Partyzana</div>
<div class="t" style="left:185px;top:287px;width:181px;height:17px;line-height:17px;color:#000;font-weight:normal;font-size:13px;text-align:left;">Stalowy paweż</div>
<div class="t" style="left:185px;top:304px;width:181px;height:17px;line-height:17px;color:#000;font-weight:normal;font-size:13px;text-align:left;">Stalowa rękawica P</div>
<div class="t" style="left:185px;top:321px;width:181px;height:17px;line-height:17px;color:#000;font-weight:normal;font-size:13px;text-align:left;">Stalowy naramiennik P</div>
<div class="t" style="left:185px;top:338px;width:181px;height:17px;line-height:17px;color:#000;font-weight:normal;font-size:13px;text-align:left;">Stalowa kolczuga</div>
<div class="t" style="left:185px;top:355px;width:181px;height:17px;line-height:17px;color:#000;font-weight:normal;font-size:13px;text-align:left;">Skórzane naudowniki</div>
<div class="t" style="left:185px;top:372px;width:181px;height:17px;line-height:17px;color:#000;font-weight:normal;font-size:13px;text-align:left;">Skórzany but L</div>
<div class="t" style="left:185px;top:389px;width:181px;height:17px;line-height:17px;color:#000;font-weight:normal;font-size:13px;text-align:left;">Skórzany but P</div>
<div class="t" style="left:185px;top:406px;width:181px;height:17px;line-height:17px;color:#000;font-weight:normal;font-size:13px;text-align:left;">Skórzana rękawica L</div>
<div class="t" style="left:185px;top:423px;width:181px;height:17px;line-height:17px;color:#000;font-weight:normal;font-size:13px;text-align:left;">Skórzany naramiennik L</div>
<div class="t" style="left:185px;top:440px;width:181px;height:17px;line-height:17px;color:#000;font-weight:normal;font-size:13px;text-align:left;">Stalowy hełm otwarty</div>
<div class="t" style="left:185px;top:457px;width:181px;height:17px;line-height:17px;color:#000;font-weight:normal;font-size:13px;text-align:left;">Lniana Koszula</div>
<div class="t" style="left:185px;top:474px;width:181px;height:17px;line-height:17px;color:#000;font-weight:normal;font-size:13px;text-align:left;">Lniana Peleryna z Kapturem</div>
<div class="t" style="left:185px;top:491px;width:181px;height:17px;line-height:17px;color:#000;font-weight:normal;font-size:13px;text-align:left;">Torba podróżna</div>
<div class="t" style="left:185px;top:508px;width:181px;height:17px;line-height:17px;color:#000;font-weight:normal;font-size:13px;text-align:left;">Bukłak (5l)</div>
<div class="t" style="left:185px;top:525px;width:181px;height:17px;line-height:17px;color:#000;font-weight:normal;font-size:13px;text-align:left;">_Pożywienie</div>
<div class="t" style="left:185px;top:542px;width:181px;height:17px;line-height:17px;color:#000;font-weight:normal;font-size:13px;text-align:left;">_Woda</div>
<div class="t" style="left:185px;top:559px;width:181px;height:17px;line-height:17px;color:#000;font-weight:normal;font-size:13px;text-align:left;">Kadzidło</div>
<div class="t" style="left:185px;top:576px;width:181px;height:17px;line-height:17px;color:#000;font-weight:normal;font-size:13px;text-align:left;">Czarka ceramiczna (0,15l)</div>
<div class="t" style="left:185px;top:593px;width:181px;height:17px;line-height:17px;color:#000;font-weight:normal;font-size:13px;text-align:left;">Krzesiwo</div>
<div class="t" style="left:185px;top:610px;width:181px;height:17px;line-height:17px;color:#000;font-weight:normal;font-size:13px;text-align:left;">Kryształowy ołtarz</div>
<div class="t" style="left:185px;top:644px;width:181px;height:17px;line-height:17px;color:#000;font-weight:normal;font-size:13px;text-align:left;">Napój LeczRany7,8</div>
<div class="t" style="left:185px;top:661px;width:181px;height:17px;line-height:17px;color:#000;font-weight:normal;font-size:13px;text-align:left;">Napój Nieśm9,5</div>
<div class="t" style="left:185px;top:678px;width:181px;height:17px;line-height:17px;color:#000;font-weight:normal;font-size:13px;text-align:left;">Napój LeczChor5,15</div>
<div class="t" style="left:185px;top:695px;width:181px;height:17px;line-height:17px;color:#000;font-weight:normal;font-size:13px;text-align:left;">Napój LeczTruc6,6</div>
<div class="t" style="left:382px;top:253px;width:31px;height:17px;line-height:17px;color:#000;font-weight:normal;font-size:13px;text-align:left;">bOk</div>
<div class="t" style="left:382px;top:270px;width:31px;height:17px;line-height:17px;color:#000;font-weight:normal;font-size:13px;text-align:left;">bDr</div>
<div class="t" style="left:382px;top:287px;width:31px;height:17px;line-height:17px;color:#000;font-weight:normal;font-size:13px;text-align:left;">T</div>
<div class="t" style="left:382px;top:304px;width:31px;height:17px;line-height:17px;color:#000;font-weight:normal;font-size:13px;text-align:left;">uRp</div>
<div class="t" style="left:382px;top:321px;width:31px;height:17px;line-height:17px;color:#000;font-weight:normal;font-size:13px;text-align:left;">uNp</div>
<div class="t" style="left:382px;top:338px;width:31px;height:17px;line-height:17px;color:#000;font-weight:normal;font-size:13px;text-align:left;">uT</div>
<div class="t" style="left:382px;top:355px;width:31px;height:17px;line-height:17px;color:#000;font-weight:normal;font-size:13px;text-align:left;">uU</div>
<div class="t" style="left:382px;top:372px;width:31px;height:17px;line-height:17px;color:#000;font-weight:normal;font-size:13px;text-align:left;">uBl</div>
<div class="t" style="left:382px;top:389px;width:31px;height:17px;line-height:17px;color:#000;font-weight:normal;font-size:13px;text-align:left;">uBp</div>
<div class="t" style="left:382px;top:406px;width:31px;height:17px;line-height:17px;color:#000;font-weight:normal;font-size:13px;text-align:left;">uRl</div>
<div class="t" style="left:382px;top:423px;width:31px;height:17px;line-height:17px;color:#000;font-weight:normal;font-size:13px;text-align:left;">uNl</div>
<div class="t" style="left:382px;top:440px;width:31px;height:17px;line-height:17px;color:#000;font-weight:normal;font-size:13px;text-align:left;">uG</div>
<div class="t" style="left:382px;top:644px;width:31px;height:17px;line-height:17px;color:#000;font-weight:normal;font-size:13px;text-align:left;">napój</div>
<div class="t" style="left:382px;top:661px;width:31px;height:17px;line-height:17px;color:#000;font-weight:normal;font-size:13px;text-align:left;">napój</div>
<div class="t" style="left:382px;top:678px;width:31px;height:17px;line-height:17px;color:#000;font-weight:normal;font-size:13px;text-align:left;">napój</div>
<div class="t" style="left:382px;top:695px;width:31px;height:17px;line-height:17px;color:#000;font-weight:normal;font-size:13px;text-align:left;">napój</div>
<div class="t" style="left:453px;top:304px;width:19px;height:17px;line-height:17px;color:#000;font-weight:normal;font-size:13px;text-align:left;">RP</div>
<div class="t" style="left:453px;top:321px;width:19px;height:17px;line-height:17px;color:#000;font-weight:normal;font-size:13px;text-align:left;">NP</div>
<div class="t" style="left:453px;top:338px;width:19px;height:17px;line-height:17px;color:#000;font-weight:normal;font-size:13px;text-align:left;">TO</div>
<div class="t" style="left:453px;top:355px;width:19px;height:17px;line-height:17px;color:#000;font-weight:normal;font-size:13px;text-align:left;">D</div>
<div class="t" style="left:453px;top:372px;width:19px;height:17px;line-height:17px;color:#000;font-weight:normal;font-size:13px;text-align:left;">BL</div>
<div class="t" style="left:453px;top:389px;width:19px;height:17px;line-height:17px;color:#000;font-weight:normal;font-size:13px;text-align:left;">BP</div>
<div class="t" style="left:453px;top:406px;width:19px;height:17px;line-height:17px;color:#000;font-weight:normal;font-size:13px;text-align:left;">RL</div>
<div class="t" style="left:453px;top:423px;width:19px;height:17px;line-height:17px;color:#000;font-weight:normal;font-size:13px;text-align:left;">NL</div>
<div class="t" style="left:453px;top:440px;width:19px;height:17px;line-height:17px;color:#000;font-weight:normal;font-size:13px;text-align:left;">G</div>
<div style="left:368px;top:253px;width:13px;height:18px;background:#ff0000;"></div>
<div class="t" style="left:369px;top:253px;width:10px;height:17px;line-height:17px;color:#800000;font-weight:normal;font-size:13px;text-align:left;">p</div>
<div style="left:368px;top:287px;width:13px;height:18px;background:#ff9900;"></div>
<div class="t" style="left:369px;top:287px;width:10px;height:17px;line-height:17px;color:#000;font-weight:normal;font-size:13px;text-align:left;">l</div>
<div style="left:368px;top:304px;width:13px;height:171px;background:#3366ff;"></div>
<div class="t" style="left:369px;top:304px;width:10px;height:17px;line-height:17px;color:#000;font-weight:normal;font-size:13px;text-align:left;">s</div>
<div class="t" style="left:369px;top:321px;width:10px;height:17px;line-height:17px;color:#000;font-weight:normal;font-size:13px;text-align:left;">s</div>
<div class="t" style="left:369px;top:338px;width:10px;height:17px;line-height:17px;color:#000;font-weight:normal;font-size:13px;text-align:left;">s</div>
<div class="t" style="left:369px;top:355px;width:10px;height:17px;line-height:17px;color:#000;font-weight:normal;font-size:13px;text-align:left;">s</div>
<div class="t" style="left:369px;top:372px;width:10px;height:17px;line-height:17px;color:#000;font-weight:normal;font-size:13px;text-align:left;">s</div>
<div class="t" style="left:369px;top:389px;width:10px;height:17px;line-height:17px;color:#000;font-weight:normal;font-size:13px;text-align:left;">s</div>
<div class="t" style="left:369px;top:406px;width:10px;height:17px;line-height:17px;color:#000;font-weight:normal;font-size:13px;text-align:left;">s</div>
<div class="t" style="left:369px;top:423px;width:10px;height:17px;line-height:17px;color:#000;font-weight:normal;font-size:13px;text-align:left;">s</div>
<div class="t" style="left:369px;top:440px;width:10px;height:17px;line-height:17px;color:#000;font-weight:normal;font-size:13px;text-align:left;">s</div>
<div class="t" style="left:369px;top:457px;width:10px;height:17px;line-height:17px;color:#000;font-weight:normal;font-size:13px;text-align:left;">s</div>
<div style="left:183px;top:320px;width:186px;height:19px;background:transparent;border:2px solid #000;"></div>
<div style="left:365px;top:335px;width:5px;height:5px;background:#000;border:1px solid #fff;"></div>
<div style="left:488px;top:93px;width:195px;height:35px;background:#003300;"></div>
<div style="left:550px;top:94px;width:131px;height:16px;background:#99cc00;"></div>
<div class="t" style="left:513px;top:93px;width:37px;height:17px;line-height:17px;color:#000;font-weight:normal;font-size:13px;text-align:center;">0</div>
<div class="t" style="left:550px;top:93px;width:35px;height:17px;line-height:17px;color:#001a00;font-weight:normal;font-size:14px;text-align:right;">54</div>
<div class="t" style="left:588px;top:93px;width:45px;height:17px;line-height:17px;color:#000;font-weight:normal;font-size:13px;text-align:center;">/</div>
<div class="t" style="left:635px;top:93px;width:46px;height:17px;line-height:17px;color:#001a00;font-weight:normal;font-size:14px;text-align:left;">54</div>
<div class="t" style="left:513px;top:110px;width:35px;height:18px;line-height:18px;color:#99cc00;font-weight:bold;font-size:14px;text-align:right;">ok</div>
<div class="t" style="left:588px;top:110px;width:43px;height:18px;line-height:18px;color:#000;font-weight:normal;font-size:14px;text-align:right;">7</div>
<div class="t" style="left:633px;top:110px;width:46px;height:18px;line-height:18px;color:#000;font-weight:normal;font-size:14px;text-align:right;">5</div>
<div style="left:488px;top:127px;width:195px;height:2px;background:#000;"></div>
<div style="left:488px;top:129px;width:195px;height:17px;background:#000080;"></div>
<div style="left:633px;top:129px;width:48px;height:16px;background:#4d7cff;"></div>
<div class="t" style="left:513px;top:128px;width:37px;height:18px;line-height:18px;color:#000;font-weight:normal;font-size:13px;text-align:center;">4</div>
<div class="t" style="left:550px;top:128px;width:37px;height:18px;line-height:18px;color:#000030;font-weight:normal;font-size:13px;text-align:center;">5,375</div>
<div class="t" style="left:588px;top:128px;width:45px;height:18px;line-height:18px;color:#000;font-weight:normal;font-size:13px;text-align:center;">0</div>
<div class="t" style="left:633px;top:129px;width:48px;height:17px;line-height:17px;color:#fff;font-weight:bold;font-size:13px;text-align:center;">9,375</div>
<div style="left:488px;top:145px;width:195px;height:2px;background:#000;"></div>
<div style="left:488px;top:147px;width:195px;height:51px;background:#800000;"></div>
<div class="t" style="left:513px;top:146px;width:37px;height:17px;line-height:17px;color:#000;font-weight:normal;font-size:13px;text-align:center;">5</div>
<div class="t" style="left:550px;top:146px;width:37px;height:17px;line-height:17px;color:#000;font-weight:normal;font-size:13px;text-align:center;">1</div>
<div class="t" style="left:588px;top:146px;width:45px;height:17px;line-height:17px;color:#000;font-weight:normal;font-size:13px;text-align:center;">0</div>
<div style="left:550px;top:163px;width:37px;height:17px;background:#ff6600;"></div>
<div style="left:632px;top:163px;width:49px;height:17px;background:#ff0000;"></div>
<div class="t" style="left:513px;top:163px;width:35px;height:18px;line-height:18px;color:#000;font-weight:normal;font-size:13px;text-align:right;">0</div>
<div class="t" style="left:550px;top:163px;width:37px;height:18px;line-height:18px;color:#fff;font-weight:bold;font-size:13px;text-align:center;">10,6</div>
<div class="t" style="left:588px;top:163px;width:43px;height:18px;line-height:18px;color:#000;font-weight:normal;font-size:13px;text-align:right;">0</div>
<div class="t" style="left:632px;top:163px;width:49px;height:18px;line-height:18px;color:#fff;font-weight:bold;font-size:12.5px;text-align:center;">19,148</div>
<div style="left:587px;top:163px;width:2px;height:35px;background:#000;"></div>
<div class="t" style="left:513px;top:180px;width:35px;height:17px;line-height:17px;color:#ff9900;font-weight:normal;font-size:14px;text-align:right;">T</div>
<div class="t" style="left:550px;top:180px;width:37px;height:17px;line-height:17px;color:#ff9900;font-weight:normal;font-size:14px;text-align:center;">8</div>
<div class="t" style="left:588px;top:180px;width:43px;height:17px;line-height:17px;color:#ff0000;font-weight:normal;font-size:14px;text-align:right;">bOk</div>
<div class="t" style="left:633px;top:180px;width:48px;height:17px;line-height:17px;color:#ff0000;font-weight:normal;font-size:14px;text-align:center;">6</div>
<div style="left:488px;top:197px;width:195px;height:2px;background:#000;"></div>
<div style="left:488px;top:199px;width:195px;height:34px;background:#993300;"></div>
<div style="left:550px;top:199px;width:131px;height:16px;background:#ff9900;"></div>
<div class="t" style="left:550px;top:198px;width:35px;height:18px;line-height:18px;color:#000;font-weight:normal;font-size:14px;text-align:right;">48</div>
<div class="t" style="left:588px;top:198px;width:45px;height:18px;line-height:18px;color:#000;font-weight:normal;font-size:13px;text-align:center;">/</div>
<div class="t" style="left:635px;top:198px;width:46px;height:18px;line-height:18px;color:#000;font-weight:normal;font-size:14px;text-align:left;">80</div>
<div class="t" style="left:560px;top:216px;width:70px;height:17px;line-height:17px;color:#1a0800;font-weight:normal;font-size:14px;text-align:right;">masa:</div>
<div class="t" style="left:600px;top:216px;width:74px;height:17px;line-height:17px;color:#1a0800;font-weight:normal;font-size:14px;text-align:right;">135,03</div>
<div style="left:488px;top:232px;width:195px;height:2px;background:#000;"></div>
<div style="left:684px;top:93px;width:5px;height:607px;background:#808080;"></div>
<div style="left:545px;top:94px;width:0;height:0;border-left:5px solid transparent;border-top:5px solid #ff0000;"></div>
<div style="left:676px;top:110px;width:0;height:0;border-left:5px solid transparent;border-top:5px solid #ff0000;"></div>
<div style="left:583px;top:110px;width:0;height:0;border-left:5px solid transparent;border-top:5px solid #ff0000;"></div>
<div style="left:545px;top:128px;width:0;height:0;border-left:5px solid transparent;border-top:5px solid #ff0000;"></div>
<div style="left:628px;top:128px;width:0;height:0;border-left:5px solid transparent;border-top:5px solid #ff0000;"></div>
<div style="left:676px;top:128px;width:0;height:0;border-left:5px solid transparent;border-top:5px solid #ff0000;"></div>
<div style="left:545px;top:146px;width:0;height:0;border-left:5px solid transparent;border-top:5px solid #ff0000;"></div>
<div style="left:583px;top:146px;width:0;height:0;border-left:5px solid transparent;border-top:5px solid #ff0000;"></div>
<div style="left:628px;top:146px;width:0;height:0;border-left:5px solid transparent;border-top:5px solid #ff0000;"></div>
<div style="left:676px;top:146px;width:0;height:0;border-left:5px solid transparent;border-top:5px solid #ff0000;"></div>
<div style="left:545px;top:163px;width:0;height:0;border-left:5px solid transparent;border-top:5px solid #ff0000;"></div>
<div style="left:628px;top:163px;width:0;height:0;border-left:5px solid transparent;border-top:5px solid #ff0000;"></div>
<div style="left:717px;top:128px;width:0;height:0;border-left:5px solid transparent;border-top:5px solid #ff0000;"></div>
<div style="left:717px;top:146px;width:0;height:0;border-left:5px solid transparent;border-top:5px solid #ff0000;"></div>
<div style="left:717px;top:163px;width:0;height:0;border-left:5px solid transparent;border-top:5px solid #ff0000;"></div>
<div style="left:717px;top:198px;width:0;height:0;border-left:5px solid transparent;border-top:5px solid #ff0000;"></div>
<div style="left:452px;top:147px;width:37px;height:51px;background:linear-gradient(90deg,rgba(255,255,255,0) 0%,#e8d8d8 25%,#b89090 60%,#800000 100%);"></div>
<div style="left:452px;top:199px;width:37px;height:34px;background:linear-gradient(90deg,rgba(255,255,255,0) 0%,#e8dcd8 25%,#c09078 60%,#993300 100%);"></div>
<svg style="position:absolute;left:440px;top:93px" width="55" height="140" viewBox="0 0 55 140">
<defs>
<linearGradient id="hg" x1="0" y1="0" x2="0" y2="1"><stop offset="0" stop-color="#c8e48c"/><stop offset="0.5" stop-color="#a6cf4a"/><stop offset="1" stop-color="#86b02a"/></linearGradient>
<linearGradient id="sg" x1="0" y1="0" x2="1" y2="0"><stop offset="0" stop-color="#4a8ff0"/><stop offset="0.5" stop-color="#3a7ee8"/><stop offset="1" stop-color="#2a66d0"/></linearGradient>
<linearGradient id="g1" x1="0" y1="0" x2="1" y2="0"><stop offset="0" stop-color="#ffffff" stop-opacity="1"/><stop offset="0.25" stop-color="#fbf3f3"/><stop offset="0.6" stop-color="#c8b0b0" stop-opacity="0.7"/><stop offset="1" stop-color="#003300"/></linearGradient>
<linearGradient id="g2" x1="0" y1="0" x2="1" y2="0"><stop offset="0" stop-color="#ffffff"/><stop offset="0.25" stop-color="#fbf3f3"/><stop offset="0.6" stop-color="#b8b8d0" stop-opacity="0.8"/><stop offset="1" stop-color="#000080"/></linearGradient>
<linearGradient id="g3" x1="0" y1="0" x2="1" y2="0"><stop offset="0" stop-color="#ffffff"/><stop offset="0.25" stop-color="#fbf0f0"/><stop offset="0.6" stop-color="#c89090"/><stop offset="1" stop-color="#800000"/></linearGradient>
<linearGradient id="g4" x1="0" y1="0" x2="1" y2="0"><stop offset="0" stop-color="#ffffff"/><stop offset="0.25" stop-color="#fbf3f0"/><stop offset="0.6" stop-color="#c0a090"/><stop offset="1" stop-color="#993300"/></linearGradient>
</defs>
<filter id="bl" x="-30%" y="-30%" width="160%" height="160%"><feGaussianBlur stdDeviation="2.2"/></filter>
<g filter="url(#bl)" fill="#9a9090" opacity="0.55">
<path d="M32,35 C20,27 12,20 12,11 C12,5 17,1 22,1 C27,1 30,4 32,7 C34,4 37,1 42,1 C47,1 52,5 52,11 C52,20 44,27 32,35 Z"/>
<path d="M12,39 Q32,35 51,39 L51,53 Q46,65 31,70 Q16,65 12,53 Z"/>
<path d="M16,74 L49,74 L48,104 L17,104 Z" opacity="0.7"/>
<path d="M12,108 L53,108 L53,138 L12,138 Z" opacity="0.5"/>
</g>
<path d="M32,34 C20,26 13,19 13,11 C13,5 17,2 22,2 C27,2 30,4 32,7 C34,4 37,2 42,2 C47,2 51,5 51,11 C51,19 44,26 32,34 Z" fill="url(#hg)" stroke="#8c8c8c" stroke-width="1.6"/>
<path d="M19,7 Q22,4 27,5" stroke="#e0f0c0" stroke-width="2" fill="none"/>
<path d="M13,40 Q32,36 50,40 L50,53 Q46,64 31,69 Q17,64 13,53 Z" fill="url(#sg)" stroke="#a0a8b0" stroke-width="1.6"/>
<path d="M30,39 L30,67" stroke="#6aaaff" stroke-width="2.5"/>
<g stroke="#c00000" stroke-width="6" stroke-linecap="round"><path d="M23,81 L44,101"/><path d="M42,81 L21,101"/></g>
<g stroke="#ff3030" stroke-width="4" stroke-linecap="round"><path d="M23,81 L44,101"/><path d="M42,81 L21,101"/></g>
<path d="M41,98 L48,105 L44,100 Z" fill="#ff3030" stroke="#c00000"/><path d="M24,98 L17,105 L21,100 Z" fill="#ff3030" stroke="#c00000"/>
<g stroke="#900000" stroke-width="3.5" stroke-linecap="round"><path d="M16,74 L22,80"/><path d="M49,74 L43,80"/></g>
<g stroke="#d01010" stroke-width="3"><path d="M19,85 L27,77"/><path d="M38,77 L46,85"/></g>
<g fill="none" stroke="#f5a623" stroke-width="2.2"><path d="M32,108 L32,136"/><path d="M17,114 L47,114"/>
<path d="M17,114 L13,126 M17,114 L22,126"/><path d="M47,114 L42,126 M47,114 L52,126"/></g>
<path d="M11,126 Q17,132 24,126 Z" fill="#f5a623"/><path d="M40,126 Q46,132 54,126 Z" fill="#f5a623"/>
<rect x="24" y="135" width="16" height="4" fill="#f5a623"/>
<circle cx="32" cy="108" r="2" fill="#f5a623"/>
</svg>
<div style="left:481px;top:233px;width:202px;height:21px;background:#000;"></div>
<div style="left:473px;top:234px;width:9px;height:19px;background:#800000;"></div>
<div class="t" style="left:474px;top:234px;width:8px;height:20px;line-height:20px;color:#ff2020;font-weight:bold;font-size:13px;text-align:left;">a</div>
<div style="left:481px;top:234px;width:9px;height:19px;background:#333399;"></div>
<div class="t" style="left:482px;top:234px;width:8px;height:20px;line-height:20px;color:#3333ff;font-weight:bold;font-size:13px;text-align:left;">c</div>
<div style="left:489px;top:234px;width:9px;height:19px;background:#993300;"></div>
<div class="t" style="left:490px;top:234px;width:8px;height:20px;line-height:20px;color:#ffcc00;font-weight:bold;font-size:13px;text-align:left;">v</div>
<div style="left:497px;top:234px;width:9px;height:19px;background:#808000;"></div>
<div class="t" style="left:498px;top:234px;width:8px;height:20px;line-height:20px;color:#ffcc00;font-weight:bold;font-size:13px;text-align:left;">v</div>
<div style="left:505px;top:234px;width:8px;height:19px;background:#808000;"></div>
<div class="t" style="left:506px;top:234px;width:7px;height:20px;line-height:20px;color:#ffcc00;font-weight:bold;font-size:13px;text-align:left;">c</div>
<div style="left:513px;top:234px;width:37px;height:19px;background:#ff0000;"></div>
<div class="t" style="left:515px;top:234px;width:35px;height:20px;line-height:20px;color:#800000;font-weight:bold;font-size:13px;text-align:left;">atak</div>
<div style="left:550px;top:234px;width:38px;height:19px;background:#3366ff;"></div>
<div class="t" style="left:552px;top:234px;width:36px;height:20px;line-height:20px;color:#000080;font-weight:bold;font-size:13px;text-align:left;">obrona</div>
<div style="left:588px;top:234px;width:45px;height:19px;background:#ff6600;"></div>
<div class="t" style="left:590px;top:234px;width:43px;height:20px;line-height:20px;color:#800000;font-weight:bold;font-size:13px;text-align:left;">waga całk</div>
<div style="left:633px;top:234px;width:48px;height:19px;background:#ffcc00;"></div>
<div class="t" style="left:635px;top:234px;width:46px;height:20px;line-height:20px;color:#333300;font-weight:bold;font-size:13px;text-align:left;">wartość</div>
<div style="left:473px;top:253px;width:9px;height:447px;background:#800000;"></div>
<div style="left:481px;top:253px;width:9px;height:447px;background:#333399;"></div>
<div style="left:489px;top:253px;width:9px;height:447px;background:#993300;"></div>
<div style="left:497px;top:253px;width:9px;height:447px;background:#808000;"></div>
<div style="left:505px;top:253px;width:8px;height:447px;background:#808000;"></div>
<div style="left:513px;top:253px;width:37px;height:447px;background:#ff0000;"></div>
<div style="left:550px;top:253px;width:38px;height:447px;background:#3366ff;"></div>
<div style="left:588px;top:253px;width:45px;height:447px;background:#ff6600;"></div>
<div style="left:633px;top:253px;width:48px;height:447px;background:#ffcc00;"></div>
<div style="left:588px;top:627px;width:46px;height:17px;background:#993300;"></div>
<div style="left:633px;top:627px;width:49px;height:17px;background:#808000;"></div>
<div class="t" style="left:515px;top:253px;width:33px;height:17px;line-height:17px;color:#600000;font-weight:normal;font-size:13px;text-align:right;">10,9</div>
<div class="t" style="left:515px;top:270px;width:33px;height:17px;line-height:17px;color:#600000;font-weight:normal;font-size:13px;text-align:right;">17</div>
<div class="t" style="left:515px;top:287px;width:33px;height:17px;line-height:17px;color:#600000;font-weight:normal;font-size:13px;text-align:right;">4,4</div>
<div class="t" style="left:552px;top:253px;width:34px;height:17px;line-height:17px;color:#000040;font-weight:normal;font-size:13px;text-align:right;">4,26</div>
<div class="t" style="left:552px;top:270px;width:34px;height:17px;line-height:17px;color:#000040;font-weight:normal;font-size:13px;text-align:right;">9,84</div>
<div class="t" style="left:552px;top:287px;width:34px;height:17px;line-height:17px;color:#000040;font-weight:normal;font-size:13px;text-align:right;">19,3</div>
<div class="t" style="left:552px;top:304px;width:34px;height:17px;line-height:17px;color:#000040;font-weight:normal;font-size:13px;text-align:right;">10,5</div>
<div class="t" style="left:552px;top:321px;width:34px;height:17px;line-height:17px;color:#000040;font-weight:normal;font-size:13px;text-align:right;">10,5</div>
<div class="t" style="left:552px;top:338px;width:34px;height:17px;line-height:17px;color:#000040;font-weight:normal;font-size:13px;text-align:right;">7,89</div>
<div class="t" style="left:552px;top:355px;width:34px;height:17px;line-height:17px;color:#000040;font-weight:normal;font-size:13px;text-align:right;">2,11</div>
<div class="t" style="left:552px;top:372px;width:34px;height:17px;line-height:17px;color:#000040;font-weight:normal;font-size:13px;text-align:right;">2,11</div>
<div class="t" style="left:552px;top:389px;width:34px;height:17px;line-height:17px;color:#000040;font-weight:normal;font-size:13px;text-align:right;">2,11</div>
<div class="t" style="left:552px;top:406px;width:34px;height:17px;line-height:17px;color:#000040;font-weight:normal;font-size:13px;text-align:right;">2,11</div>
<div class="t" style="left:552px;top:423px;width:34px;height:17px;line-height:17px;color:#000040;font-weight:normal;font-size:13px;text-align:right;">2,11</div>
<div class="t" style="left:552px;top:440px;width:34px;height:17px;line-height:17px;color:#000040;font-weight:normal;font-size:13px;text-align:right;">6,84</div>
<div class="t" style="left:590px;top:253px;width:41px;height:17px;line-height:17px;color:#200000;font-weight:normal;font-size:13px;text-align:right;">0,991</div>
<div class="t" style="left:590px;top:270px;width:41px;height:17px;line-height:17px;color:#200000;font-weight:normal;font-size:13px;text-align:right;">1,378</div>
<div class="t" style="left:590px;top:287px;width:41px;height:17px;line-height:17px;color:#200000;font-weight:normal;font-size:13px;text-align:right;">5,764</div>
<div class="t" style="left:590px;top:304px;width:41px;height:17px;line-height:17px;color:#200000;font-weight:normal;font-size:13px;text-align:right;">0,45</div>
<div class="t" style="left:590px;top:321px;width:41px;height:17px;line-height:17px;color:#200000;font-weight:normal;font-size:13px;text-align:right;">2,9</div>
<div class="t" style="left:590px;top:338px;width:41px;height:17px;line-height:17px;color:#200000;font-weight:normal;font-size:13px;text-align:right;">6</div>
<div class="t" style="left:590px;top:355px;width:41px;height:17px;line-height:17px;color:#200000;font-weight:normal;font-size:13px;text-align:right;">0,825</div>
<div class="t" style="left:590px;top:372px;width:41px;height:17px;line-height:17px;color:#200000;font-weight:normal;font-size:13px;text-align:right;">0,5</div>
<div class="t" style="left:590px;top:389px;width:41px;height:17px;line-height:17px;color:#200000;font-weight:normal;font-size:13px;text-align:right;">0,5</div>
<div class="t" style="left:590px;top:406px;width:41px;height:17px;line-height:17px;color:#200000;font-weight:normal;font-size:13px;text-align:right;">0,113</div>
<div class="t" style="left:590px;top:423px;width:41px;height:17px;line-height:17px;color:#200000;font-weight:normal;font-size:13px;text-align:right;">0,725</div>
<div class="t" style="left:590px;top:440px;width:41px;height:17px;line-height:17px;color:#200000;font-weight:normal;font-size:13px;text-align:right;">2,9</div>
<div class="t" style="left:590px;top:457px;width:41px;height:17px;line-height:17px;color:#200000;font-weight:normal;font-size:13px;text-align:right;">0,306</div>
<div class="t" style="left:590px;top:474px;width:41px;height:17px;line-height:17px;color:#200000;font-weight:normal;font-size:13px;text-align:right;">0,558</div>
<div class="t" style="left:590px;top:491px;width:41px;height:17px;line-height:17px;color:#200000;font-weight:normal;font-size:13px;text-align:right;">0,75</div>
<div class="t" style="left:590px;top:508px;width:41px;height:17px;line-height:17px;color:#200000;font-weight:normal;font-size:13px;text-align:right;">0,75</div>
<div class="t" style="left:590px;top:525px;width:41px;height:17px;line-height:17px;color:#200000;font-weight:normal;font-size:13px;text-align:right;">10,95</div>
<div class="t" style="left:590px;top:542px;width:41px;height:17px;line-height:17px;color:#200000;font-weight:normal;font-size:13px;text-align:right;">4</div>
<div class="t" style="left:590px;top:559px;width:41px;height:17px;line-height:17px;color:#200000;font-weight:normal;font-size:13px;text-align:right;">2,8</div>
<div class="t" style="left:590px;top:576px;width:41px;height:17px;line-height:17px;color:#200000;font-weight:normal;font-size:13px;text-align:right;">0,25</div>
<div class="t" style="left:590px;top:593px;width:41px;height:17px;line-height:17px;color:#200000;font-weight:normal;font-size:13px;text-align:right;">0,15</div>
<div class="t" style="left:590px;top:610px;width:41px;height:17px;line-height:17px;color:#200000;font-weight:normal;font-size:13px;text-align:right;">3</div>
<div class="t" style="left:590px;top:644px;width:41px;height:17px;line-height:17px;color:#200000;font-weight:normal;font-size:13px;text-align:right;">0,04</div>
<div class="t" style="left:590px;top:661px;width:41px;height:17px;line-height:17px;color:#200000;font-weight:normal;font-size:13px;text-align:right;">0,111</div>
<div class="t" style="left:590px;top:678px;width:41px;height:17px;line-height:17px;color:#200000;font-weight:normal;font-size:13px;text-align:right;">0,077</div>
<div class="t" style="left:590px;top:695px;width:41px;height:17px;line-height:17px;color:#200000;font-weight:normal;font-size:13px;text-align:right;">0,035</div>
<div class="t" style="left:635px;top:253px;width:44px;height:17px;line-height:17px;color:#201000;font-weight:normal;font-size:13px;text-align:right;">317,5</div>
<div class="t" style="left:635px;top:270px;width:44px;height:17px;line-height:17px;color:#201000;font-weight:normal;font-size:13px;text-align:right;">180,3</div>
<div class="t" style="left:635px;top:287px;width:44px;height:17px;line-height:17px;color:#201000;font-weight:normal;font-size:13px;text-align:right;">960</div>
<div class="t" style="left:635px;top:304px;width:44px;height:17px;line-height:17px;color:#201000;font-weight:normal;font-size:13px;text-align:right;">22</div>
<div class="t" style="left:635px;top:321px;width:44px;height:17px;line-height:17px;color:#201000;font-weight:normal;font-size:13px;text-align:right;">65</div>
<div class="t" style="left:635px;top:338px;width:44px;height:17px;line-height:17px;color:#201000;font-weight:normal;font-size:13px;text-align:right;">168</div>
<div class="t" style="left:635px;top:355px;width:44px;height:17px;line-height:17px;color:#201000;font-weight:normal;font-size:13px;text-align:right;">27</div>
<div class="t" style="left:635px;top:372px;width:44px;height:17px;line-height:17px;color:#201000;font-weight:normal;font-size:13px;text-align:right;">8</div>
<div class="t" style="left:635px;top:389px;width:44px;height:17px;line-height:17px;color:#201000;font-weight:normal;font-size:13px;text-align:right;">8</div>
<div class="t" style="left:635px;top:406px;width:44px;height:17px;line-height:17px;color:#201000;font-weight:normal;font-size:13px;text-align:right;">4</div>
<div class="t" style="left:635px;top:423px;width:44px;height:17px;line-height:17px;color:#201000;font-weight:normal;font-size:13px;text-align:right;">13</div>
<div class="t" style="left:635px;top:440px;width:44px;height:17px;line-height:17px;color:#201000;font-weight:normal;font-size:13px;text-align:right;">115</div>
<div class="t" style="left:635px;top:457px;width:44px;height:17px;line-height:17px;color:#201000;font-weight:normal;font-size:13px;text-align:right;">10,3</div>
<div class="t" style="left:635px;top:474px;width:44px;height:17px;line-height:17px;color:#201000;font-weight:normal;font-size:13px;text-align:right;">14,1</div>
<div class="t" style="left:635px;top:491px;width:44px;height:17px;line-height:17px;color:#201000;font-weight:normal;font-size:13px;text-align:right;">5</div>
<div class="t" style="left:635px;top:508px;width:44px;height:17px;line-height:17px;color:#201000;font-weight:normal;font-size:13px;text-align:right;">5</div>
<div class="t" style="left:635px;top:525px;width:44px;height:17px;line-height:17px;color:#201000;font-weight:normal;font-size:13px;text-align:right;">18,6</div>
<div class="t" style="left:635px;top:542px;width:44px;height:17px;line-height:17px;color:#201000;font-weight:normal;font-size:13px;text-align:right;">4</div>
<div class="t" style="left:635px;top:559px;width:44px;height:17px;line-height:17px;color:#201000;font-weight:normal;font-size:13px;text-align:right;">140</div>
<div class="t" style="left:635px;top:576px;width:44px;height:17px;line-height:17px;color:#201000;font-weight:normal;font-size:13px;text-align:right;">0,5</div>
<div class="t" style="left:635px;top:593px;width:44px;height:17px;line-height:17px;color:#201000;font-weight:normal;font-size:13px;text-align:right;">0,5</div>
<div class="t" style="left:635px;top:610px;width:44px;height:17px;line-height:17px;color:#201000;font-weight:normal;font-size:13px;text-align:right;">400</div>
<div class="t" style="left:635px;top:644px;width:44px;height:17px;line-height:17px;color:#201000;font-weight:normal;font-size:13px;text-align:right;">291,7</div>
<div class="t" style="left:635px;top:661px;width:44px;height:17px;line-height:17px;color:#201000;font-weight:normal;font-size:13px;text-align:right;">635</div>
<div class="t" style="left:635px;top:678px;width:44px;height:17px;line-height:17px;color:#201000;font-weight:normal;font-size:13px;text-align:right;">197,8</div>
<div class="t" style="left:635px;top:695px;width:44px;height:17px;line-height:17px;color:#201000;font-weight:normal;font-size:13px;text-align:right;">45</div>
<div style="left:681px;top:233px;width:1px;height:21px;background:#fff;"></div>
<div style="left:689px;top:93px;width:106px;height:53px;background:#99cc00;"></div>
<div style="left:689px;top:146px;width:106px;height:87px;background:#003300;"></div>
<div class="t" style="left:689px;top:93px;width:106px;height:17px;line-height:17px;color:#331100;font-weight:normal;font-size:13px;text-align:center;">fizyczne</div>
<div class="t" style="left:689px;top:110px;width:33px;height:18px;line-height:18px;color:#000;font-weight:normal;font-size:14px;text-align:center;text-decoration:underline;">S</div>
<div class="t" style="left:689px;top:128px;width:33px;height:18px;line-height:18px;color:#000;font-weight:normal;font-size:14px;text-align:center;">8</div>
<div class="t" style="left:689px;top:163px;width:33px;height:18px;line-height:18px;color:#99cc00;font-weight:bold;font-size:13px;text-align:center;">8</div>
<div class="t" style="left:689px;top:180px;width:33px;height:18px;line-height:18px;color:#2f8f2f;font-weight:normal;font-size:11.5px;text-align:center;letter-spacing:-0.5px;">8|4</div>
<div class="t" style="left:689px;top:198px;width:33px;height:18px;line-height:18px;color:#2f8f2f;font-weight:normal;font-size:10px;text-align:center;letter-spacing:-0.3px;">32|64</div>
<div class="t" style="left:689px;top:216px;width:33px;height:17px;line-height:17px;color:#a0a0a0;font-weight:bold;font-size:13px;text-align:center;">7</div>
<div class="t" style="left:722px;top:110px;width:33px;height:18px;line-height:18px;color:#000;font-weight:normal;font-size:14px;text-align:center;text-decoration:underline;">ZR</div>
<div class="t" style="left:722px;top:128px;width:33px;height:18px;line-height:18px;color:#000;font-weight:normal;font-size:14px;text-align:center;">14</div>
<div class="t" style="left:722px;top:163px;width:33px;height:18px;line-height:18px;color:#99cc00;font-weight:bold;font-size:13px;text-align:center;">14</div>
<div class="t" style="left:722px;top:180px;width:33px;height:18px;line-height:18px;color:#2f8f2f;font-weight:normal;font-size:11.5px;text-align:center;letter-spacing:-0.5px;">14|7</div>
<div class="t" style="left:722px;top:198px;width:33px;height:18px;line-height:18px;color:#2f8f2f;font-weight:normal;font-size:10px;text-align:center;letter-spacing:-0.3px;">56|112</div>
<div class="t" style="left:722px;top:216px;width:33px;height:17px;line-height:17px;color:#a0a0a0;font-weight:bold;font-size:13px;text-align:center;">12</div>
<div class="t" style="left:755px;top:110px;width:40px;height:18px;line-height:18px;color:#000;font-weight:normal;font-size:14px;text-align:center;text-decoration:underline;">ŻW</div>
<div class="t" style="left:755px;top:128px;width:40px;height:18px;line-height:18px;color:#000;font-weight:normal;font-size:14px;text-align:center;">7</div>
<div class="t" style="left:755px;top:163px;width:40px;height:18px;line-height:18px;color:#99cc00;font-weight:bold;font-size:13px;text-align:center;">7</div>
<div class="t" style="left:755px;top:180px;width:40px;height:18px;line-height:18px;color:#2f8f2f;font-weight:normal;font-size:11.5px;text-align:center;letter-spacing:-0.5px;">7|4</div>
<div class="t" style="left:755px;top:198px;width:40px;height:18px;line-height:18px;color:#2f8f2f;font-weight:normal;font-size:10px;text-align:center;letter-spacing:-0.3px;">28|56</div>
<div class="t" style="left:755px;top:216px;width:40px;height:17px;line-height:17px;color:#a0a0a0;font-weight:bold;font-size:13px;text-align:center;">6</div>
<div style="left:722px;top:111px;width:1px;height:122px;background:#000;"></div>
<div style="left:755px;top:111px;width:1px;height:122px;background:#000;"></div>
<div style="left:689px;top:128px;width:106px;height:1px;background:#000;"></div>
<div style="left:689px;top:145px;width:106px;height:2px;background:#000;"></div>
<div style="left:689px;top:180px;width:106px;height:1px;background:#000;"></div>
<div style="left:689px;top:198px;width:106px;height:1px;background:#000;"></div>
<div style="left:689px;top:216px;width:106px;height:1px;background:#000;"></div>
<div style="left:689px;top:231px;width:106px;height:2px;background:#000;"></div>
<div style="left:689px;top:233px;width:106px;height:21px;background:#000;"></div>
<div style="left:689px;top:234px;width:106px;height:19px;background:#99cc00;"></div>
<div style="left:755px;top:233px;width:1px;height:21px;background:#000;"></div>
<div style="left:775px;top:233px;width:1px;height:21px;background:#000;"></div>
<div class="t" style="left:691px;top:234px;width:64px;height:20px;line-height:20px;color:#000;font-weight:bold;font-size:13px;text-align:left;letter-spacing:-0.4px;">umiejętności</div>
<div class="t" style="left:757px;top:234px;width:18px;height:20px;line-height:20px;color:#000;font-weight:bold;font-size:13px;text-align:left;">Baza</div>
<div class="t" style="left:777px;top:234px;width:18px;height:20px;line-height:20px;color:#000;font-weight:bold;font-size:13px;text-align:left;">Poziom</div>
<div style="left:689px;top:253px;width:106px;height:447px;background:#003300;"></div>
<div style="left:689px;top:252px;width:106px;height:1px;background:#000;"></div>
<div style="left:795px;top:93px;width:104px;height:53px;background:#00ccff;"></div>
<div style="left:795px;top:146px;width:104px;height:87px;background:#003366;"></div>
<div class="t" style="left:795px;top:93px;width:104px;height:17px;line-height:17px;color:#000066;font-weight:normal;font-size:13px;text-align:center;">mentalne</div>
<div class="t" style="left:795px;top:110px;width:33px;height:18px;line-height:18px;color:#000;font-weight:normal;font-size:14px;text-align:center;text-decoration:underline;">SW</div>
<div class="t" style="left:795px;top:128px;width:33px;height:18px;line-height:18px;color:#000;font-weight:normal;font-size:14px;text-align:center;">6</div>
<div class="t" style="left:795px;top:163px;width:33px;height:18px;line-height:18px;color:#33ccff;font-weight:bold;font-size:13px;text-align:center;">6</div>
<div class="t" style="left:795px;top:180px;width:33px;height:18px;line-height:18px;color:#1f7f9f;font-weight:normal;font-size:11.5px;text-align:center;letter-spacing:-0.5px;">6|3</div>
<div class="t" style="left:795px;top:198px;width:33px;height:18px;line-height:18px;color:#1f7f9f;font-weight:normal;font-size:10px;text-align:center;letter-spacing:-0.3px;">24|48</div>
<div class="t" style="left:795px;top:216px;width:33px;height:17px;line-height:17px;color:#a0a0a0;font-weight:bold;font-size:13px;text-align:center;">8</div>
<div class="t" style="left:828px;top:110px;width:33px;height:18px;line-height:18px;color:#000;font-weight:normal;font-size:14px;text-align:center;text-decoration:underline;">IN</div>
<div class="t" style="left:828px;top:128px;width:33px;height:18px;line-height:18px;color:#000;font-weight:normal;font-size:14px;text-align:center;">20</div>
<div class="t" style="left:828px;top:163px;width:33px;height:18px;line-height:18px;color:#33ccff;font-weight:bold;font-size:13px;text-align:center;">20</div>
<div class="t" style="left:828px;top:180px;width:33px;height:18px;line-height:18px;color:#1f7f9f;font-weight:normal;font-size:11.5px;text-align:center;letter-spacing:-0.5px;">20|10</div>
<div class="t" style="left:828px;top:198px;width:33px;height:18px;line-height:18px;color:#1f7f9f;font-weight:normal;font-size:10px;text-align:center;letter-spacing:-0.3px;">80|160</div>
<div class="t" style="left:828px;top:216px;width:33px;height:17px;line-height:17px;color:#a0a0a0;font-weight:bold;font-size:13px;text-align:center;">20</div>
<div class="t" style="left:861px;top:110px;width:38px;height:18px;line-height:18px;color:#000;font-weight:normal;font-size:14px;text-align:center;text-decoration:underline;">PE</div>
<div class="t" style="left:861px;top:128px;width:38px;height:18px;line-height:18px;color:#000;font-weight:normal;font-size:14px;text-align:center;">14</div>
<div class="t" style="left:861px;top:163px;width:38px;height:18px;line-height:18px;color:#33ccff;font-weight:bold;font-size:13px;text-align:center;">14</div>
<div class="t" style="left:861px;top:180px;width:38px;height:18px;line-height:18px;color:#1f7f9f;font-weight:normal;font-size:11.5px;text-align:center;letter-spacing:-0.5px;">14|7</div>
<div class="t" style="left:861px;top:198px;width:38px;height:18px;line-height:18px;color:#1f7f9f;font-weight:normal;font-size:10px;text-align:center;letter-spacing:-0.3px;">56|112</div>
<div class="t" style="left:861px;top:216px;width:38px;height:17px;line-height:17px;color:#a0a0a0;font-weight:bold;font-size:13px;text-align:center;">15</div>
<div style="left:828px;top:111px;width:1px;height:122px;background:#000;"></div>
<div style="left:861px;top:111px;width:1px;height:122px;background:#000;"></div>
<div style="left:795px;top:128px;width:104px;height:1px;background:#000;"></div>
<div style="left:795px;top:145px;width:104px;height:2px;background:#000;"></div>
<div style="left:795px;top:180px;width:104px;height:1px;background:#000;"></div>
<div style="left:795px;top:198px;width:104px;height:1px;background:#000;"></div>
<div style="left:795px;top:216px;width:104px;height:1px;background:#000;"></div>
<div style="left:795px;top:231px;width:104px;height:2px;background:#000;"></div>
<div style="left:795px;top:233px;width:104px;height:21px;background:#000;"></div>
<div style="left:795px;top:234px;width:104px;height:19px;background:#00ccff;"></div>
<div style="left:861px;top:233px;width:1px;height:21px;background:#000;"></div>
<div style="left:880px;top:233px;width:1px;height:21px;background:#000;"></div>
<div class="t" style="left:797px;top:234px;width:64px;height:20px;line-height:20px;color:#000066;font-weight:bold;font-size:13px;text-align:left;letter-spacing:-0.4px;">umiejętności</div>
<div class="t" style="left:863px;top:234px;width:17px;height:20px;line-height:20px;color:#000066;font-weight:bold;font-size:13px;text-align:left;">Baza</div>
<div class="t" style="left:882px;top:234px;width:17px;height:20px;line-height:20px;color:#000066;font-weight:bold;font-size:13px;text-align:left;">Poziom</div>
<div style="left:795px;top:253px;width:104px;height:447px;background:#003366;"></div>
<div style="left:795px;top:252px;width:104px;height:1px;background:#000;"></div>
<div style="left:899px;top:93px;width:105px;height:53px;background:#ffcc00;"></div>
<div style="left:899px;top:146px;width:105px;height:87px;background:#333300;"></div>
<div class="t" style="left:899px;top:93px;width:105px;height:17px;line-height:17px;color:#331100;font-weight:normal;font-size:13px;text-align:center;">społeczne</div>
<div class="t" style="left:899px;top:110px;width:33px;height:18px;line-height:18px;color:#000;font-weight:normal;font-size:14px;text-align:center;text-decoration:underline;">CH</div>
<div class="t" style="left:899px;top:128px;width:33px;height:18px;line-height:18px;color:#000;font-weight:normal;font-size:14px;text-align:center;">27</div>
<div class="t" style="left:899px;top:163px;width:33px;height:18px;line-height:18px;color:#ffcc00;font-weight:bold;font-size:13px;text-align:center;">27</div>
<div class="t" style="left:899px;top:180px;width:33px;height:18px;line-height:18px;color:#8a8a10;font-weight:normal;font-size:11.5px;text-align:center;letter-spacing:-0.5px;">27|14</div>
<div class="t" style="left:899px;top:198px;width:33px;height:18px;line-height:18px;color:#8a8a10;font-weight:normal;font-size:10px;text-align:center;letter-spacing:-0.3px;">108|216</div>
<div class="t" style="left:899px;top:216px;width:33px;height:17px;line-height:17px;color:#a0a0a0;font-weight:bold;font-size:13px;text-align:center;">25</div>
<div class="t" style="left:932px;top:110px;width:33px;height:18px;line-height:18px;color:#000;font-weight:normal;font-size:14px;text-align:center;text-decoration:underline;">KO</div>
<div class="t" style="left:932px;top:128px;width:33px;height:18px;line-height:18px;color:#000;font-weight:normal;font-size:14px;text-align:center;">20</div>
<div class="t" style="left:932px;top:163px;width:33px;height:18px;line-height:18px;color:#ffcc00;font-weight:bold;font-size:13px;text-align:center;">20</div>
<div class="t" style="left:932px;top:180px;width:33px;height:18px;line-height:18px;color:#8a8a10;font-weight:normal;font-size:11.5px;text-align:center;letter-spacing:-0.5px;">20|10</div>
<div class="t" style="left:932px;top:198px;width:33px;height:18px;line-height:18px;color:#8a8a10;font-weight:normal;font-size:10px;text-align:center;letter-spacing:-0.3px;">80|160</div>
<div class="t" style="left:932px;top:216px;width:33px;height:17px;line-height:17px;color:#a0a0a0;font-weight:bold;font-size:13px;text-align:center;">23</div>
<div class="t" style="left:965px;top:110px;width:39px;height:18px;line-height:18px;color:#000;font-weight:normal;font-size:14px;text-align:center;text-decoration:underline;">SZ</div>
<div class="t" style="left:965px;top:128px;width:39px;height:18px;line-height:18px;color:#000;font-weight:normal;font-size:14px;text-align:center;">16</div>
<div class="t" style="left:965px;top:163px;width:39px;height:18px;line-height:18px;color:#ffcc00;font-weight:bold;font-size:13px;text-align:center;">16</div>
<div class="t" style="left:965px;top:180px;width:39px;height:18px;line-height:18px;color:#8a8a10;font-weight:normal;font-size:11.5px;text-align:center;letter-spacing:-0.5px;">16|8</div>
<div class="t" style="left:965px;top:198px;width:39px;height:18px;line-height:18px;color:#8a8a10;font-weight:normal;font-size:10px;text-align:center;letter-spacing:-0.3px;">64|128</div>
<div class="t" style="left:965px;top:216px;width:39px;height:17px;line-height:17px;color:#a0a0a0;font-weight:bold;font-size:13px;text-align:center;">15</div>
<div style="left:932px;top:111px;width:1px;height:122px;background:#000;"></div>
<div style="left:965px;top:111px;width:1px;height:122px;background:#000;"></div>
<div style="left:899px;top:128px;width:105px;height:1px;background:#000;"></div>
<div style="left:899px;top:145px;width:105px;height:2px;background:#000;"></div>
<div style="left:899px;top:180px;width:105px;height:1px;background:#000;"></div>
<div style="left:899px;top:198px;width:105px;height:1px;background:#000;"></div>
<div style="left:899px;top:216px;width:105px;height:1px;background:#000;"></div>
<div style="left:899px;top:231px;width:105px;height:2px;background:#000;"></div>
<div style="left:899px;top:233px;width:105px;height:21px;background:#000;"></div>
<div style="left:899px;top:234px;width:105px;height:19px;background:#ffcc00;"></div>
<div style="left:965px;top:233px;width:1px;height:21px;background:#000;"></div>
<div style="left:984px;top:233px;width:1px;height:21px;background:#000;"></div>
<div class="t" style="left:901px;top:234px;width:64px;height:20px;line-height:20px;color:#000;font-weight:bold;font-size:13px;text-align:left;letter-spacing:-0.4px;">umiejętności</div>
<div class="t" style="left:967px;top:234px;width:17px;height:20px;line-height:20px;color:#000;font-weight:bold;font-size:13px;text-align:left;">Baza</div>
<div class="t" style="left:986px;top:234px;width:18px;height:20px;line-height:20px;color:#000;font-weight:bold;font-size:13px;text-align:left;">Poziom</div>
<div style="left:899px;top:253px;width:105px;height:447px;background:#333300;"></div>
<div style="left:899px;top:252px;width:105px;height:1px;background:#000;"></div>
<div style="left:794px;top:93px;width:2px;height:607px;background:#000;"></div>
<div style="left:898px;top:93px;width:2px;height:607px;background:#000;"></div>
<div style="left:1004px;top:93px;width:5px;height:105px;background:#fff;"></div>
<div style="left:1004px;top:198px;width:4px;height:502px;background:#9933ff;"></div>
<div style="left:689px;top:253px;width:86px;height:17px;background:#92d050;"></div>
<div class="t" style="left:691px;top:253px;width:64px;height:17px;line-height:17px;color:#1a0a0a;font-weight:normal;font-size:13px;text-align:left;">Płatnerstwo</div>
<div class="t" style="left:756px;top:253px;width:19px;height:17px;line-height:17px;color:#1a0a0a;font-weight:normal;font-size:13px;text-align:center;letter-spacing:-0.5px;">ZR</div>
<div style="left:689px;top:270px;width:86px;height:17px;background:#92d050;"></div>
<div class="t" style="left:691px;top:270px;width:64px;height:17px;line-height:17px;color:#1a0a0a;font-weight:normal;font-size:13px;text-align:left;">Jeździectwo</div>
<div class="t" style="left:756px;top:270px;width:19px;height:17px;line-height:17px;color:#1a0a0a;font-weight:normal;font-size:13px;text-align:center;letter-spacing:-0.5px;">ZR</div>
<div style="left:689px;top:287px;width:86px;height:17px;background:#92d050;"></div>
<div class="t" style="left:691px;top:287px;width:64px;height:17px;line-height:17px;color:#1a0a0a;font-weight:normal;font-size:13px;text-align:left;">Taniec</div>
<div class="t" style="left:756px;top:287px;width:19px;height:17px;line-height:17px;color:#1a0a0a;font-weight:normal;font-size:13px;text-align:center;letter-spacing:-0.5px;">ZR</div>
<div style="left:689px;top:304px;width:86px;height:17px;background:#92d050;"></div>
<div class="t" style="left:691px;top:304px;width:64px;height:17px;line-height:17px;color:#1a0a0a;font-weight:normal;font-size:13px;text-align:left;">Bieganie</div>
<div class="t" style="left:756px;top:304px;width:19px;height:17px;line-height:17px;color:#1a0a0a;font-weight:normal;font-size:13px;text-align:center;letter-spacing:-0.5px;">ŻW</div>
<div style="left:689px;top:321px;width:86px;height:17px;background:#92d050;"></div>
<div class="t" style="left:691px;top:321px;width:64px;height:17px;line-height:17px;color:#1a0a0a;font-weight:normal;font-size:13px;text-align:left;">Pływanie</div>
<div class="t" style="left:756px;top:321px;width:19px;height:17px;line-height:17px;color:#1a0a0a;font-weight:normal;font-size:13px;text-align:center;letter-spacing:-0.5px;">ŻW</div>
<div style="left:689px;top:338px;width:86px;height:17px;background:#92d050;"></div>
<div class="t" style="left:691px;top:338px;width:64px;height:17px;line-height:17px;color:#1a0a0a;font-weight:normal;font-size:13px;text-align:left;">Wiosłowanie</div>
<div class="t" style="left:756px;top:338px;width:19px;height:17px;line-height:17px;color:#1a0a0a;font-weight:normal;font-size:13px;text-align:center;letter-spacing:-0.5px;">ŻW</div>
<div style="left:689px;top:355px;width:86px;height:17px;background:#92d050;"></div>
<div class="t" style="left:691px;top:355px;width:64px;height:17px;line-height:17px;color:#1a0a0a;font-weight:normal;font-size:13px;text-align:left;">Uniki</div>
<div class="t" style="left:756px;top:355px;width:19px;height:17px;line-height:17px;color:#1a0a0a;font-weight:normal;font-size:13px;text-align:center;letter-spacing:-0.5px;">ZR</div>
<div style="left:689px;top:372px;width:86px;height:17px;background:#92d050;"></div>
<div class="t" style="left:691px;top:372px;width:64px;height:17px;line-height:17px;color:#1a0a0a;font-weight:normal;font-size:13px;text-align:left;">Walka wręcz</div>
<div class="t" style="left:756px;top:372px;width:19px;height:17px;line-height:17px;color:#1a0a0a;font-weight:normal;font-size:13px;text-align:center;letter-spacing:-0.5px;">ZR</div>
<div style="left:689px;top:389px;width:86px;height:17px;background:#92d050;"></div>
<div class="t" style="left:691px;top:389px;width:64px;height:17px;line-height:17px;color:#1a0a0a;font-weight:normal;font-size:13px;text-align:left;">Krótkie ostrza</div>
<div class="t" style="left:756px;top:389px;width:19px;height:17px;line-height:17px;color:#1a0a0a;font-weight:normal;font-size:13px;text-align:center;letter-spacing:-0.5px;">ZR</div>
<div style="left:689px;top:406px;width:86px;height:17px;background:#92d050;"></div>
<div class="t" style="left:691px;top:406px;width:64px;height:17px;line-height:17px;color:#1a0a0a;font-weight:normal;font-size:13px;text-align:left;">Długie ostrza</div>
<div class="t" style="left:756px;top:406px;width:19px;height:17px;line-height:17px;color:#1a0a0a;font-weight:normal;font-size:13px;text-align:center;letter-spacing:-0.5px;">ZR</div>
<div style="left:689px;top:423px;width:86px;height:17px;background:#92d050;"></div>
<div class="t" style="left:691px;top:423px;width:64px;height:17px;line-height:17px;color:#1a0a0a;font-weight:normal;font-size:13px;text-align:left;">Obuchy</div>
<div class="t" style="left:756px;top:423px;width:19px;height:17px;line-height:17px;color:#1a0a0a;font-weight:normal;font-size:13px;text-align:center;letter-spacing:-0.5px;">S</div>
<div class="t" style="left:691px;top:440px;width:64px;height:17px;line-height:17px;color:#001a00;font-weight:normal;font-size:13px;text-align:left;">Topory</div>
<div class="t" style="left:756px;top:440px;width:19px;height:17px;line-height:17px;color:#001a00;font-weight:normal;font-size:13px;text-align:center;letter-spacing:-0.5px;">S</div>
<div style="left:689px;top:457px;width:86px;height:17px;background:#92d050;"></div>
<div class="t" style="left:691px;top:457px;width:64px;height:17px;line-height:17px;color:#1a0a0a;font-weight:normal;font-size:13px;text-align:left;">Drzewce</div>
<div class="t" style="left:756px;top:457px;width:19px;height:17px;line-height:17px;color:#1a0a0a;font-weight:normal;font-size:13px;text-align:center;letter-spacing:-0.5px;">S</div>
<div class="t" style="left:691px;top:474px;width:64px;height:17px;line-height:17px;color:#001a00;font-weight:normal;font-size:13px;text-align:left;">Baty</div>
<div class="t" style="left:756px;top:474px;width:19px;height:17px;line-height:17px;color:#001a00;font-weight:normal;font-size:13px;text-align:center;letter-spacing:-0.5px;">ZR</div>
<div class="t" style="left:691px;top:491px;width:64px;height:17px;line-height:17px;color:#001a00;font-weight:normal;font-size:13px;text-align:left;">Łuki</div>
<div class="t" style="left:756px;top:491px;width:19px;height:17px;line-height:17px;color:#001a00;font-weight:normal;font-size:13px;text-align:center;letter-spacing:-0.5px;">ZR</div>
<div class="t" style="left:691px;top:508px;width:64px;height:17px;line-height:17px;color:#001a00;font-weight:normal;font-size:13px;text-align:left;">Rzucanie</div>
<div class="t" style="left:756px;top:508px;width:19px;height:17px;line-height:17px;color:#001a00;font-weight:normal;font-size:13px;text-align:center;letter-spacing:-0.5px;">ZR</div>
<div class="t" style="left:691px;top:525px;width:64px;height:17px;line-height:17px;color:#001a00;font-weight:normal;font-size:13px;text-align:left;">Plujki</div>
<div class="t" style="left:756px;top:525px;width:19px;height:17px;line-height:17px;color:#001a00;font-weight:normal;font-size:13px;text-align:center;letter-spacing:-0.5px;">ZR</div>
<div class="t" style="left:691px;top:542px;width:64px;height:17px;line-height:17px;color:#001a00;font-weight:normal;font-size:13px;text-align:left;">Rzuc.widelcem</div>
<div class="t" style="left:756px;top:542px;width:19px;height:17px;line-height:17px;color:#001a00;font-weight:normal;font-size:13px;text-align:center;letter-spacing:-0.5px;">ZR</div>
<div style="left:689px;top:559px;width:86px;height:17px;background:#92d050;"></div>
<div class="t" style="left:691px;top:559px;width:64px;height:17px;line-height:17px;color:#1a0a0a;font-weight:normal;font-size:13px;text-align:left;">Tarcze</div>
<div class="t" style="left:756px;top:559px;width:19px;height:17px;line-height:17px;color:#1a0a0a;font-weight:normal;font-size:13px;text-align:center;letter-spacing:-0.5px;">ZR</div>
<div style="left:689px;top:576px;width:86px;height:17px;background:#92d050;"></div>
<div class="t" style="left:691px;top:576px;width:64px;height:17px;line-height:17px;color:#1a0a0a;font-weight:normal;font-size:13px;text-align:left;">Bednarstwo</div>
<div class="t" style="left:756px;top:576px;width:19px;height:17px;line-height:17px;color:#1a0a0a;font-weight:normal;font-size:13px;text-align:center;letter-spacing:-0.5px;">ZR</div>
<div style="left:775px;top:253px;width:20px;height:447px;background:#99cc00;"></div>
<div class="t" style="left:775px;top:253px;width:20px;height:17px;line-height:17px;color:#1a1a00;font-weight:normal;font-size:13px;text-align:center;">2</div>
<div class="t" style="left:775px;top:270px;width:20px;height:17px;line-height:17px;color:#1a1a00;font-weight:normal;font-size:13px;text-align:center;">5</div>
<div class="t" style="left:775px;top:287px;width:20px;height:17px;line-height:17px;color:#1a1a00;font-weight:normal;font-size:13px;text-align:center;">3</div>
<div class="t" style="left:775px;top:304px;width:20px;height:17px;line-height:17px;color:#1a1a00;font-weight:normal;font-size:13px;text-align:center;">3</div>
<div class="t" style="left:775px;top:321px;width:20px;height:17px;line-height:17px;color:#1a1a00;font-weight:normal;font-size:13px;text-align:center;">3</div>
<div class="t" style="left:775px;top:338px;width:20px;height:17px;line-height:17px;color:#1a1a00;font-weight:normal;font-size:13px;text-align:center;">2</div>
<div class="t" style="left:775px;top:355px;width:20px;height:17px;line-height:17px;color:#1a1a00;font-weight:normal;font-size:13px;text-align:center;">3</div>
<div class="t" style="left:775px;top:372px;width:20px;height:17px;line-height:17px;color:#1a1a00;font-weight:normal;font-size:13px;text-align:center;">3</div>
<div class="t" style="left:775px;top:389px;width:20px;height:17px;line-height:17px;color:#1a1a00;font-weight:normal;font-size:13px;text-align:center;">6</div>
<div class="t" style="left:775px;top:406px;width:20px;height:17px;line-height:17px;color:#1a1a00;font-weight:normal;font-size:13px;text-align:center;">1</div>
<div class="t" style="left:775px;top:423px;width:20px;height:17px;line-height:17px;color:#1a1a00;font-weight:normal;font-size:13px;text-align:center;">1</div>
<div class="t" style="left:775px;top:440px;width:20px;height:17px;line-height:17px;color:#1a1a00;font-weight:normal;font-size:13px;text-align:center;">0</div>
<div class="t" style="left:775px;top:457px;width:20px;height:17px;line-height:17px;color:#1a1a00;font-weight:normal;font-size:13px;text-align:center;">4</div>
<div class="t" style="left:775px;top:474px;width:20px;height:17px;line-height:17px;color:#1a1a00;font-weight:normal;font-size:13px;text-align:center;">0</div>
<div class="t" style="left:775px;top:491px;width:20px;height:17px;line-height:17px;color:#1a1a00;font-weight:normal;font-size:13px;text-align:center;">0</div>
<div class="t" style="left:775px;top:508px;width:20px;height:17px;line-height:17px;color:#1a1a00;font-weight:normal;font-size:13px;text-align:center;">0</div>
<div class="t" style="left:775px;top:525px;width:20px;height:17px;line-height:17px;color:#1a1a00;font-weight:normal;font-size:13px;text-align:center;">0</div>
<div class="t" style="left:775px;top:542px;width:20px;height:17px;line-height:17px;color:#1a1a00;font-weight:normal;font-size:13px;text-align:center;">0</div>
<div class="t" style="left:775px;top:559px;width:20px;height:17px;line-height:17px;color:#1a1a00;font-weight:normal;font-size:13px;text-align:center;">8</div>
<div class="t" style="left:775px;top:576px;width:20px;height:17px;line-height:17px;color:#1a1a00;font-weight:normal;font-size:13px;text-align:center;">2</div>
<div class="t" style="left:775px;top:593px;width:20px;height:17px;line-height:17px;color:#1a1a00;font-weight:normal;font-size:13px;text-align:center;">0</div>
<div class="t" style="left:775px;top:610px;width:20px;height:17px;line-height:17px;color:#1a1a00;font-weight:normal;font-size:13px;text-align:center;">0</div>
<div class="t" style="left:775px;top:627px;width:20px;height:17px;line-height:17px;color:#1a1a00;font-weight:normal;font-size:13px;text-align:center;">0</div>
<div class="t" style="left:775px;top:644px;width:20px;height:17px;line-height:17px;color:#1a1a00;font-weight:normal;font-size:13px;text-align:center;">0</div>
<div class="t" style="left:775px;top:661px;width:20px;height:17px;line-height:17px;color:#1a1a00;font-weight:normal;font-size:13px;text-align:center;">0</div>
<div class="t" style="left:775px;top:678px;width:20px;height:17px;line-height:17px;color:#1a1a00;font-weight:normal;font-size:13px;text-align:center;">0</div>
<div style="left:755px;top:253px;width:1px;height:447px;background:#000;"></div>
<div style="left:774px;top:253px;width:1px;height:447px;background:#000;"></div>
<div style="left:795px;top:253px;width:104px;height:17px;background:#00b0f0;"></div>
<div class="t" style="left:797px;top:253px;width:64px;height:17px;line-height:17px;color:#000066;font-weight:normal;font-size:13px;text-align:left;">Medytacja</div>
<div class="t" style="left:861px;top:253px;width:19px;height:17px;line-height:17px;color:#000066;font-weight:normal;font-size:13px;text-align:center;letter-spacing:-0.5px;">SW</div>
<div class="t" style="left:880px;top:253px;width:19px;height:17px;line-height:17px;color:#000033;font-weight:normal;font-size:13px;text-align:center;">3</div>
<div style="left:795px;top:270px;width:104px;height:17px;background:#00b0f0;"></div>
<div class="t" style="left:797px;top:270px;width:64px;height:17px;line-height:17px;color:#000066;font-weight:normal;font-size:13px;text-align:left;">Jęz_jinhański</div>
<div class="t" style="left:861px;top:270px;width:19px;height:17px;line-height:17px;color:#000066;font-weight:normal;font-size:13px;text-align:center;letter-spacing:-0.5px;">IN</div>
<div class="t" style="left:880px;top:270px;width:19px;height:17px;line-height:17px;color:#000033;font-weight:normal;font-size:13px;text-align:center;">2</div>
<div style="left:795px;top:287px;width:104px;height:17px;background:#00b0f0;"></div>
<div class="t" style="left:797px;top:287px;width:64px;height:17px;line-height:17px;color:#000066;font-weight:normal;font-size:13px;text-align:left;">Taktyka</div>
<div class="t" style="left:861px;top:287px;width:19px;height:17px;line-height:17px;color:#000066;font-weight:normal;font-size:13px;text-align:center;letter-spacing:-0.5px;">IN</div>
<div class="t" style="left:880px;top:287px;width:19px;height:17px;line-height:17px;color:#000033;font-weight:normal;font-size:13px;text-align:center;">6</div>
<div style="left:795px;top:304px;width:104px;height:17px;background:#00b0f0;"></div>
<div class="t" style="left:797px;top:304px;width:64px;height:17px;line-height:17px;color:#000066;font-weight:normal;font-size:13px;text-align:left;">Czytanie i pisanie</div>
<div class="t" style="left:861px;top:304px;width:19px;height:17px;line-height:17px;color:#000066;font-weight:normal;font-size:13px;text-align:center;letter-spacing:-0.5px;">IN</div>
<div class="t" style="left:880px;top:304px;width:19px;height:17px;line-height:17px;color:#000033;font-weight:normal;font-size:13px;text-align:center;">3</div>
<div style="left:795px;top:321px;width:104px;height:17px;background:#00b0f0;"></div>
<div class="t" style="left:797px;top:321px;width:64px;height:17px;line-height:17px;color:#000066;font-weight:normal;font-size:13px;text-align:left;">Szacowanie</div>
<div class="t" style="left:861px;top:321px;width:19px;height:17px;line-height:17px;color:#000066;font-weight:normal;font-size:13px;text-align:center;letter-spacing:-0.5px;">IN</div>
<div class="t" style="left:880px;top:321px;width:19px;height:17px;line-height:17px;color:#000033;font-weight:normal;font-size:13px;text-align:center;">2</div>
<div style="left:795px;top:338px;width:104px;height:17px;background:#00b0f0;"></div>
<div class="t" style="left:797px;top:338px;width:64px;height:17px;line-height:17px;color:#000066;font-weight:normal;font-size:13px;text-align:left;">Obserwacja</div>
<div class="t" style="left:861px;top:338px;width:19px;height:17px;line-height:17px;color:#000066;font-weight:normal;font-size:13px;text-align:center;letter-spacing:-0.5px;">PE</div>
<div class="t" style="left:880px;top:338px;width:19px;height:17px;line-height:17px;color:#000033;font-weight:normal;font-size:13px;text-align:center;">2</div>
<div class="t" style="left:797px;top:355px;width:64px;height:17px;line-height:17px;color:#001a33;font-weight:normal;font-size:13px;text-align:left;">Alchemia</div>
<div class="t" style="left:861px;top:355px;width:19px;height:17px;line-height:17px;color:#001a33;font-weight:normal;font-size:13px;text-align:center;letter-spacing:-0.5px;">IN</div>
<div class="t" style="left:797px;top:372px;width:64px;height:17px;line-height:17px;color:#001a33;font-weight:normal;font-size:13px;text-align:left;">M: Zwierzęta</div>
<div class="t" style="left:861px;top:372px;width:19px;height:17px;line-height:17px;color:#001a33;font-weight:normal;font-size:13px;text-align:center;letter-spacing:-0.5px;">SW</div>
<div class="t" style="left:797px;top:389px;width:64px;height:17px;line-height:17px;color:#001a33;font-weight:normal;font-size:13px;text-align:left;">M: Rośliny</div>
<div class="t" style="left:861px;top:389px;width:19px;height:17px;line-height:17px;color:#001a33;font-weight:normal;font-size:13px;text-align:center;letter-spacing:-0.5px;">SW</div>
<div class="t" style="left:797px;top:406px;width:64px;height:17px;line-height:17px;color:#001a33;font-weight:normal;font-size:13px;text-align:left;">M: Leczenie</div>
<div class="t" style="left:861px;top:406px;width:19px;height:17px;line-height:17px;color:#001a33;font-weight:normal;font-size:13px;text-align:center;letter-spacing:-0.5px;">SW</div>
<div class="t" style="left:797px;top:423px;width:64px;height:17px;line-height:17px;color:#001a33;font-weight:normal;font-size:13px;text-align:left;">M: Przywołanie</div>
<div class="t" style="left:861px;top:423px;width:19px;height:17px;line-height:17px;color:#001a33;font-weight:normal;font-size:13px;text-align:center;letter-spacing:-0.5px;">SW</div>
<div class="t" style="left:797px;top:440px;width:64px;height:17px;line-height:17px;color:#001a33;font-weight:normal;font-size:13px;text-align:left;">M: Ogień</div>
<div class="t" style="left:861px;top:440px;width:19px;height:17px;line-height:17px;color:#001a33;font-weight:normal;font-size:13px;text-align:center;letter-spacing:-0.5px;">SW</div>
<div class="t" style="left:797px;top:457px;width:64px;height:17px;line-height:17px;color:#001a33;font-weight:normal;font-size:13px;text-align:left;">M: Ziemia</div>
<div class="t" style="left:861px;top:457px;width:19px;height:17px;line-height:17px;color:#001a33;font-weight:normal;font-size:13px;text-align:center;letter-spacing:-0.5px;">SW</div>
<div class="t" style="left:797px;top:474px;width:64px;height:17px;line-height:17px;color:#001a33;font-weight:normal;font-size:13px;text-align:left;">M: Powietrze</div>
<div class="t" style="left:861px;top:474px;width:19px;height:17px;line-height:17px;color:#001a33;font-weight:normal;font-size:13px;text-align:center;letter-spacing:-0.5px;">SW</div>
<div class="t" style="left:797px;top:491px;width:64px;height:17px;line-height:17px;color:#001a33;font-weight:normal;font-size:13px;text-align:left;">M: Woda</div>
<div class="t" style="left:861px;top:491px;width:19px;height:17px;line-height:17px;color:#001a33;font-weight:normal;font-size:13px;text-align:center;letter-spacing:-0.5px;">SW</div>
<div class="t" style="left:797px;top:508px;width:64px;height:17px;line-height:17px;color:#001a33;font-weight:normal;font-size:13px;text-align:left;">M: Psionika</div>
<div class="t" style="left:861px;top:508px;width:19px;height:17px;line-height:17px;color:#001a33;font-weight:normal;font-size:13px;text-align:center;letter-spacing:-0.5px;">SW</div>
<div class="t" style="left:797px;top:525px;width:64px;height:17px;line-height:17px;color:#001a33;font-weight:normal;font-size:13px;text-align:left;">M: Materia</div>
<div class="t" style="left:861px;top:525px;width:19px;height:17px;line-height:17px;color:#001a33;font-weight:normal;font-size:13px;text-align:center;letter-spacing:-0.5px;">SW</div>
<div class="t" style="left:797px;top:542px;width:64px;height:17px;line-height:17px;color:#001a33;font-weight:normal;font-size:13px;text-align:left;">M: Nekromancja</div>
<div class="t" style="left:861px;top:542px;width:19px;height:17px;line-height:17px;color:#001a33;font-weight:normal;font-size:13px;text-align:center;letter-spacing:-0.5px;">SW</div>
<div style="left:795px;top:559px;width:104px;height:17px;background:#00b0f0;"></div>
<div class="t" style="left:797px;top:559px;width:64px;height:17px;line-height:17px;color:#000066;font-weight:normal;font-size:13px;text-align:left;">Orientacja</div>
<div class="t" style="left:861px;top:559px;width:19px;height:17px;line-height:17px;color:#000066;font-weight:normal;font-size:13px;text-align:center;letter-spacing:-0.5px;">PE</div>
<div class="t" style="left:880px;top:559px;width:19px;height:17px;line-height:17px;color:#000033;font-weight:normal;font-size:13px;text-align:center;">5</div>
<div style="left:795px;top:576px;width:104px;height:17px;background:#00b0f0;"></div>
<div class="t" style="left:797px;top:576px;width:64px;height:17px;line-height:17px;color:#000066;font-weight:normal;font-size:13px;text-align:left;">Tropienie</div>
<div class="t" style="left:861px;top:576px;width:19px;height:17px;line-height:17px;color:#000066;font-weight:normal;font-size:13px;text-align:center;letter-spacing:-0.5px;">PE</div>
<div class="t" style="left:880px;top:576px;width:19px;height:17px;line-height:17px;color:#000033;font-weight:normal;font-size:13px;text-align:center;">2</div>
<div style="left:795px;top:593px;width:104px;height:17px;background:#00b0f0;"></div>
<div class="t" style="left:797px;top:593px;width:64px;height:17px;line-height:17px;color:#000066;font-weight:normal;font-size:13px;text-align:left;">Ukrywanie</div>
<div class="t" style="left:861px;top:593px;width:19px;height:17px;line-height:17px;color:#000066;font-weight:normal;font-size:13px;text-align:center;letter-spacing:-0.5px;">PE</div>
<div class="t" style="left:880px;top:593px;width:19px;height:17px;line-height:17px;color:#000033;font-weight:normal;font-size:13px;text-align:center;">2</div>
<div style="left:861px;top:253px;width:1px;height:447px;background:#000;"></div>
<div style="left:880px;top:253px;width:1px;height:447px;background:#000;"></div>
<div style="left:900px;top:253px;width:104px;height:17px;background:#ffcc00;"></div>
<div class="t" style="left:901px;top:253px;width:64px;height:17px;line-height:17px;color:#1a0a00;font-weight:normal;font-size:13px;text-align:left;">Dowodzenie</div>
<div class="t" style="left:965px;top:253px;width:19px;height:17px;line-height:17px;color:#1a0a00;font-weight:normal;font-size:13px;text-align:center;letter-spacing:-0.5px;">CH</div>
<div class="t" style="left:984px;top:253px;width:20px;height:17px;line-height:17px;color:#1a0a00;font-weight:normal;font-size:13px;text-align:center;">8</div>
<div style="left:900px;top:270px;width:104px;height:17px;background:#ffcc00;"></div>
<div class="t" style="left:901px;top:270px;width:64px;height:17px;line-height:17px;color:#1a0a00;font-weight:normal;font-size:13px;text-align:left;">Gawędziarstwo</div>
<div class="t" style="left:965px;top:270px;width:19px;height:17px;line-height:17px;color:#1a0a00;font-weight:normal;font-size:13px;text-align:center;letter-spacing:-0.5px;">CH</div>
<div class="t" style="left:984px;top:270px;width:20px;height:17px;line-height:17px;color:#1a0a00;font-weight:normal;font-size:13px;text-align:center;">4</div>
<div style="left:900px;top:287px;width:104px;height:17px;background:#ffcc00;"></div>
<div class="t" style="left:901px;top:287px;width:64px;height:17px;line-height:17px;color:#1a0a00;font-weight:normal;font-size:13px;text-align:left;">Etykieta</div>
<div class="t" style="left:965px;top:287px;width:19px;height:17px;line-height:17px;color:#1a0a00;font-weight:normal;font-size:13px;text-align:center;letter-spacing:-0.5px;">KO</div>
<div class="t" style="left:984px;top:287px;width:20px;height:17px;line-height:17px;color:#1a0a00;font-weight:normal;font-size:13px;text-align:center;">2</div>
<div style="left:900px;top:304px;width:104px;height:17px;background:#ffcc00;"></div>
<div class="t" style="left:901px;top:304px;width:64px;height:17px;line-height:17px;color:#1a0a00;font-weight:normal;font-size:13px;text-align:left;">Torturowanie</div>
<div class="t" style="left:965px;top:304px;width:19px;height:17px;line-height:17px;color:#1a0a00;font-weight:normal;font-size:13px;text-align:center;letter-spacing:-0.5px;">KO</div>
<div class="t" style="left:984px;top:304px;width:20px;height:17px;line-height:17px;color:#1a0a00;font-weight:normal;font-size:13px;text-align:center;">2</div>
<div style="left:900px;top:321px;width:104px;height:17px;background:#ffcc00;"></div>
<div class="t" style="left:901px;top:321px;width:64px;height:17px;line-height:17px;color:#1a0a00;font-weight:normal;font-size:13px;text-align:left;">Zbieranie informacji</div>
<div class="t" style="left:965px;top:321px;width:19px;height:17px;line-height:17px;color:#1a0a00;font-weight:normal;font-size:13px;text-align:center;letter-spacing:-0.5px;">KO</div>
<div class="t" style="left:984px;top:321px;width:20px;height:17px;line-height:17px;color:#1a0a00;font-weight:normal;font-size:13px;text-align:center;">2</div>
<div style="left:900px;top:338px;width:104px;height:17px;background:#ffcc00;"></div>
<div class="t" style="left:901px;top:338px;width:64px;height:17px;line-height:17px;color:#1a0a00;font-weight:normal;font-size:13px;text-align:left;">Hazard</div>
<div class="t" style="left:965px;top:338px;width:19px;height:17px;line-height:17px;color:#1a0a00;font-weight:normal;font-size:13px;text-align:center;letter-spacing:-0.5px;">SZ</div>
<div class="t" style="left:984px;top:338px;width:20px;height:17px;line-height:17px;color:#1a0a00;font-weight:normal;font-size:13px;text-align:center;">4</div>
<div style="left:900px;top:355px;width:104px;height:17px;background:#ffcc00;"></div>
<div class="t" style="left:901px;top:355px;width:64px;height:17px;line-height:17px;color:#1a0a00;font-weight:normal;font-size:13px;text-align:left;">Modlitwa</div>
<div class="t" style="left:965px;top:355px;width:19px;height:17px;line-height:17px;color:#1a0a00;font-weight:normal;font-size:13px;text-align:center;letter-spacing:-0.5px;">SZ</div>
<div class="t" style="left:984px;top:355px;width:20px;height:17px;line-height:17px;color:#1a0a00;font-weight:normal;font-size:13px;text-align:center;">4</div>
<div style="left:965px;top:253px;width:1px;height:447px;background:#000;"></div>
<div style="left:984px;top:253px;width:1px;height:447px;background:#000;"></div>
<div style="left:1008px;top:77px;width:16px;height:623px;background:linear-gradient(90deg,#dfe3e8 0px,#dfe3e8 1px,#b8bfc7 2px,#bec5cd 100%);"></div>
<div style="left:1009px;top:77px;width:15px;height:6px;background:linear-gradient(#f5f7fa,#cdd4dc);border:1px solid #8f9aa6;"></div>
<div style="left:1009px;top:83px;width:15px;height:17px;background:linear-gradient(90deg,#c9d0d8,#dde2e8);"></div>
<div style="left:1012px;top:88px;width:0;height:0;border-left:5px solid transparent;border-right:5px solid transparent;border-bottom:5px solid #5d6670;"></div>
<div style="left:1010px;top:100px;width:13px;height:49px;background:linear-gradient(90deg,#e4e8ec,#fbfcfd 40%,#d5dae0);border:1px solid #8f9aa6;border-radius:2px;"></div>
<div style="left:1013px;top:120px;width:7px;height:1px;background:#6b7480;"></div>
<div style="left:1013px;top:123px;width:7px;height:1px;background:#6b7480;"></div>
<div style="left:1013px;top:126px;width:7px;height:1px;background:#6b7480;"></div>
<div style="left:1012px;top:689px;width:0;height:0;border-left:5px solid transparent;border-right:5px solid transparent;border-top:5px solid #5d6670;"></div>
<div style="left:0px;top:700px;width:1024px;height:16px;background:linear-gradient(#e6e9ed,#cdd3da);"></div>
<div style="left:0px;top:700px;width:1024px;height:1px;background:#9ea7b1;"></div>
<div class="t" style="left:6px;top:701px;width:14px;height:14px;line-height:14px;color:#3d4550;font-weight:normal;font-size:8px;text-align:center;">|◀</div>
<div class="t" style="left:22px;top:701px;width:14px;height:14px;line-height:14px;color:#3d4550;font-weight:normal;font-size:8px;text-align:center;">◀</div>
<div class="t" style="left:37px;top:701px;width:14px;height:14px;line-height:14px;color:#3d4550;font-weight:normal;font-size:8px;text-align:center;">▶</div>
<div class="t" style="left:52px;top:701px;width:14px;height:14px;line-height:14px;color:#3d4550;font-weight:normal;font-size:8px;text-align:center;">▶|</div>
<svg style="position:absolute;left:0;top:0" width="560" height="738"><defs><linearGradient id="tg" x1="0" y1="0" x2="0" y2="1"><stop offset="0" stop-color="#eef1f4"/><stop offset="1" stop-color="#d3d9e0"/></linearGradient></defs><polygon points="62,701 129,701 119,715 62,715" fill="url(#tg)" stroke="#8d97a3" stroke-width="1"/><polygon points="196,701 255,701 245,715 188,715" fill="url(#tg)" stroke="#8d97a3" stroke-width="1"/><polygon points="253,701 315,701 305,715 245,715" fill="url(#tg)" stroke="#8d97a3" stroke-width="1"/><polygon points="313,701 365,701 355,715 305,715" fill="url(#tg)" stroke="#8d97a3" stroke-width="1"/><polygon points="363,701 458,701 448,715 355,715" fill="url(#tg)" stroke="#8d97a3" stroke-width="1"/><polygon points="456,701 519,701 509,715 448,715" fill="url(#tg)" stroke="#8d97a3" stroke-width="1"/><polygon points="517,701 549,701 539,715 509,715" fill="url(#tg)" stroke="#8d97a3" stroke-width="1"/><polygon points="127,700 198,700 188,715 119,715" fill="#fbfcfd" stroke="#7f8a96" stroke-width="1"/></svg>
<div class="t" style="left:59px;top:700px;width:65px;height:15px;line-height:15px;color:#4a5262;font-weight:normal;font-size:13px;text-align:center;">Vereorn</div>
<div class="t" style="left:123px;top:700px;width:69px;height:15px;line-height:15px;color:#3b4150;font-weight:bold;font-size:12.5px;text-align:center;">Lunastus</div>
<div class="t" style="left:193px;top:700px;width:57px;height:15px;line-height:15px;color:#4a5262;font-weight:normal;font-size:13px;text-align:center;">Sevira</div>
<div class="t" style="left:250px;top:700px;width:60px;height:15px;line-height:15px;color:#4a5262;font-weight:normal;font-size:13px;text-align:center;">WALKA</div>
<div class="t" style="left:310px;top:700px;width:50px;height:15px;line-height:15px;color:#4a5262;font-weight:normal;font-size:13px;text-align:center;">BAZA</div>
<div class="t" style="left:360px;top:700px;width:93px;height:15px;line-height:15px;color:#4a5262;font-weight:normal;font-size:13px;text-align:center;">BESTIARIUSZ</div>
<div class="t" style="left:453px;top:700px;width:61px;height:15px;line-height:15px;color:#4a5262;font-weight:normal;font-size:13px;text-align:center;">puste</div>
<div style="left:525px;top:704px;width:12px;height:8px;background:#fff;border:1px solid #6b7fa0;"></div>
<div style="left:522px;top:702px;width:5px;height:5px;background:#f5c030;border-radius:50%;"></div>
<div style="left:855px;top:701px;width:153px;height:15px;background:linear-gradient(#e3e7ec,#f5f7fa 50%,#dfe4ea);"></div>
<div style="left:855px;top:702px;width:4px;height:13px;background:#fff;border:1px solid #8f9aa6;"></div>
<div style="left:864px;top:705px;width:0;height:0;border-top:4px solid transparent;border-bottom:4px solid transparent;border-right:5px solid #6b7480;"></div>
<div style="left:879px;top:702px;width:53px;height:13px;background:linear-gradient(#fdfdfe,#e6eaee);border:1px solid #8f9aa6;border-radius:2px;"></div>
<div style="left:902px;top:705px;width:1px;height:7px;background:#6b7480;"></div>
<div style="left:904px;top:705px;width:1px;height:7px;background:#6b7480;"></div>
<div style="left:906px;top:705px;width:1px;height:7px;background:#6b7480;"></div>
<div style="left:994px;top:705px;width:0;height:0;border-top:4px solid transparent;border-bottom:4px solid transparent;border-left:5px solid #6b7480;"></div>
<div style="left:1002px;top:702px;width:4px;height:13px;background:#fff;border:1px solid #8f9aa6;"></div>
<div style="left:1008px;top:701px;width:16px;height:15px;background:#dfe4ea;"></div>
<div style="left:0px;top:716px;width:1024px;height:22px;background:linear-gradient(#d3d8de,#bfc6cf 50%,#b3bbc5);"></div>
<div style="left:0px;top:716px;width:1024px;height:1px;background:#8f9aa6;"></div>
<div class="t" style="left:8px;top:717px;width:60px;height:20px;line-height:20px;color:#3b4350;font-weight:normal;font-size:12px;text-align:left;">Gotowy</div>
<div style="left:56px;top:718px;width:1px;height:20px;background:#9aa3ae;"></div>
<div style="left:780px;top:718px;width:1px;height:20px;background:#9aa3ae;"></div>
<div style="left:785px;top:719px;width:19px;height:17px;background:linear-gradient(#fff3c8,#ffd777);border:1px solid #c2a25a;"></div>
<div style="left:789px;top:723px;width:11px;height:9px;background:transparent;border:1px solid #555;"></div>
<div style="left:804px;top:719px;width:19px;height:17px;background:linear-gradient(#eef1f4,#d3d9e0);border:1px solid #9aa4af;"></div>
<div style="left:809px;top:722px;width:9px;height:11px;background:transparent;border:1px solid #555;"></div>
<div style="left:823px;top:719px;width:18px;height:17px;background:linear-gradient(#eef1f4,#d3d9e0);border:1px solid #9aa4af;"></div>
<div style="left:827px;top:722px;width:10px;height:11px;background:transparent;border:1px solid #555;border-right:2px solid #555"></div>
<div class="t" style="left:849px;top:717px;width:40px;height:20px;line-height:20px;color:#3b4350;font-weight:normal;font-size:12px;text-align:left;">100%</div>
<div style="left:886px;top:719px;width:16px;height:16px;background:radial-gradient(#fafbfc,#c4cbd3);border:1px solid #6d7784;border-radius:50%;"></div>
<div style="left:890px;top:726px;width:8px;height:2px;background:#333;"></div>
<div style="left:902px;top:726px;width:102px;height:2px;background:#5f6873;"></div>
<div style="left:947px;top:721px;width:8px;height:12px;background:linear-gradient(#ffffff,#cbd2da);border:1px solid #5f6873;"></div>
<div style="left:1003px;top:719px;width:17px;height:17px;background:radial-gradient(#fafbfc,#c4cbd3);border:1px solid #6d7784;border-radius:50%;"></div>
<div style="left:1007px;top:726px;width:9px;height:2px;background:#333;"></div>
<div style="left:1010px;top:723px;width:2px;height:9px;background:#333;"></div>
</div></body></html>
